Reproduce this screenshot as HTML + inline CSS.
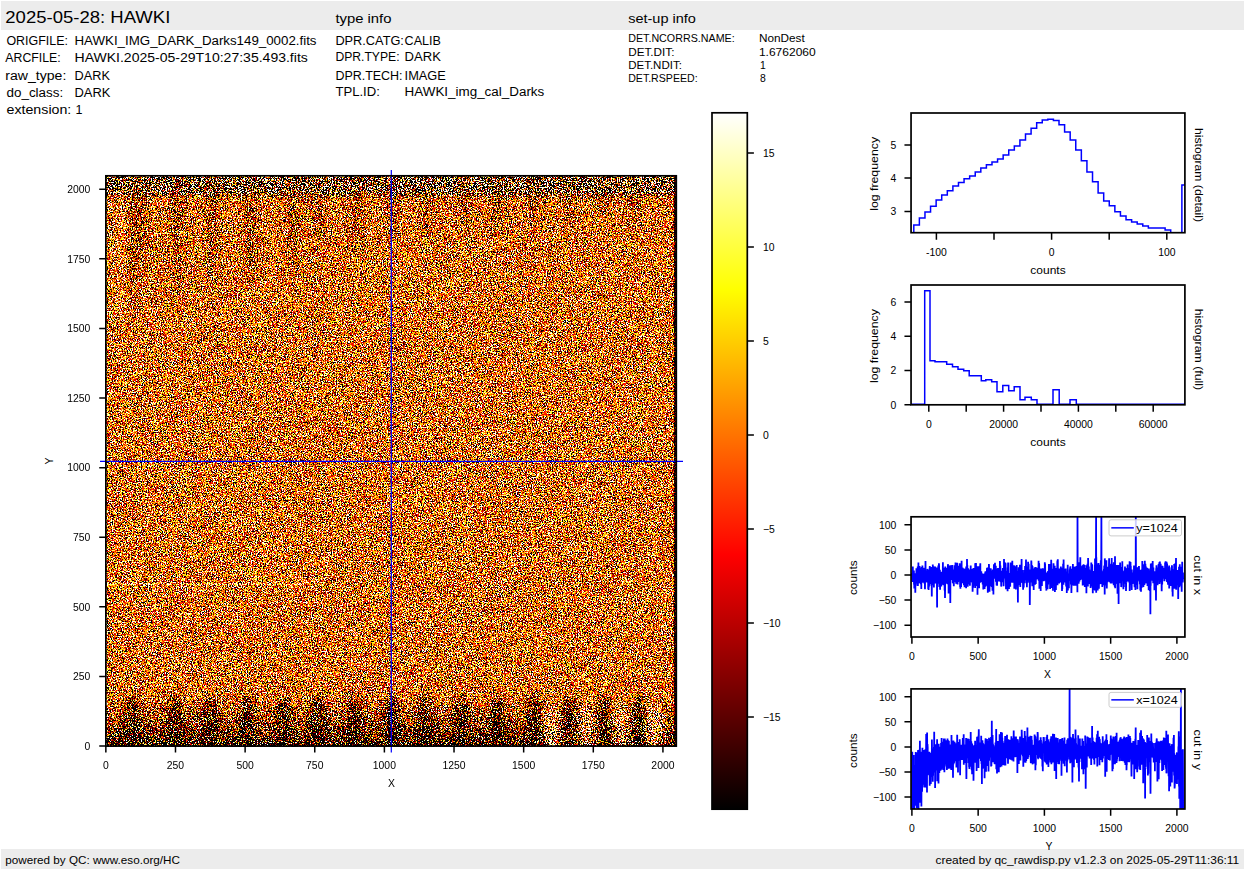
<!DOCTYPE html><html><head><meta charset="utf-8"><style>html,body{margin:0;padding:0;background:#fff;}svg{display:block}text{font-family:"Liberation Sans",sans-serif;fill:#000}</style></head><body>
<svg width="1245" height="870" viewBox="0 0 1245 870">
<defs>
<filter id="nz" x="0" y="0" width="100%" height="100%" color-interpolation-filters="sRGB" filterUnits="objectBoundingBox"><feTurbulence type="fractalNoise" baseFrequency="0.8" numOctaves="1" seed="3"/><feColorMatrix type="matrix" values="1 0 0 0 0 1 0 0 0 0 1 0 0 0 0 0 0 0 0 1"/><feComponentTransfer><feFuncR type="linear" slope="10.4763" intercept="-3.9884"/><feFuncG type="linear" slope="10.0398" intercept="-4.7805"/><feFuncB type="linear" slope="15.0597" intercept="-8.6708"/></feComponentTransfer></filter>
<linearGradient id="hot" x1="0" y1="1" x2="0" y2="0"><stop offset="0" stop-color="#000"/><stop offset="0.365079" stop-color="#f00"/><stop offset="0.746032" stop-color="#ff0"/><stop offset="1" stop-color="#fff"/></linearGradient>
</defs>
<rect x="1" y="1" width="1243" height="29" fill="#ececec"/>
<rect x="1" y="849" width="1243" height="20" fill="#ececec"/>
<text x="5.3" y="22.5" font-size="16" text-anchor="start" textLength="165.0" lengthAdjust="spacingAndGlyphs">2025-05-28: HAWKI</text>
<text x="335.4" y="22.5" font-size="12.5" text-anchor="start" textLength="56.1" lengthAdjust="spacingAndGlyphs">type info</text>
<text x="628.2" y="22.7" font-size="12.5" text-anchor="start" textLength="67.7" lengthAdjust="spacingAndGlyphs">set-up info</text>
<text x="6.4" y="45.2" font-size="12.5" text-anchor="start" textLength="61.6" lengthAdjust="spacingAndGlyphs">ORIGFILE:</text>
<text x="74.5" y="45.2" font-size="12.5" text-anchor="start" textLength="242.0" lengthAdjust="spacingAndGlyphs">HAWKI_IMG_DARK_Darks149_0002.fits</text>
<text x="5.3" y="61.5" font-size="12.5" text-anchor="start" textLength="55.4" lengthAdjust="spacingAndGlyphs">ARCFILE:</text>
<text x="74.5" y="61.5" font-size="12.5" text-anchor="start" textLength="233.3" lengthAdjust="spacingAndGlyphs">HAWKI.2025-05-29T10:27:35.493.fits</text>
<text x="5.3" y="79.5" font-size="12.5" text-anchor="start" textLength="61.0" lengthAdjust="spacingAndGlyphs">raw_type:</text>
<text x="74.5" y="79.5" font-size="12.5" text-anchor="start" textLength="35.4" lengthAdjust="spacingAndGlyphs">DARK</text>
<text x="6.5" y="96.8" font-size="12.5" text-anchor="start" textLength="56.7" lengthAdjust="spacingAndGlyphs">do_class:</text>
<text x="74.5" y="96.8" font-size="12.5" text-anchor="start" textLength="36.0" lengthAdjust="spacingAndGlyphs">DARK</text>
<text x="6.5" y="113.5" font-size="12.5" text-anchor="start" textLength="64.8" lengthAdjust="spacingAndGlyphs">extension:</text>
<text x="75.6" y="113.5" font-size="12.5" text-anchor="start">1</text>
<text x="335.4" y="44.7" font-size="12.5" text-anchor="start" textLength="68.5" lengthAdjust="spacingAndGlyphs">DPR.CATG:</text>
<text x="404.6" y="44.7" font-size="12.5" text-anchor="start" textLength="36.3" lengthAdjust="spacingAndGlyphs">CALIB</text>
<text x="335.4" y="61.3" font-size="12.5" text-anchor="start" textLength="64.2" lengthAdjust="spacingAndGlyphs">DPR.TYPE:</text>
<text x="404.6" y="61.3" font-size="12.5" text-anchor="start" textLength="36.3" lengthAdjust="spacingAndGlyphs">DARK</text>
<text x="335.4" y="79.8" font-size="12.5" text-anchor="start" textLength="67.2" lengthAdjust="spacingAndGlyphs">DPR.TECH:</text>
<text x="404.6" y="79.8" font-size="12.5" text-anchor="start" textLength="41.3" lengthAdjust="spacingAndGlyphs">IMAGE</text>
<text x="335.4" y="96.4" font-size="12.5" text-anchor="start" textLength="44.5" lengthAdjust="spacingAndGlyphs">TPL.ID:</text>
<text x="404.6" y="96.4" font-size="12.5" text-anchor="start" textLength="139.7" lengthAdjust="spacingAndGlyphs">HAWKI_img_cal_Darks</text>
<text x="628.2" y="42.4" font-size="10.4" text-anchor="start" textLength="106.5" lengthAdjust="spacingAndGlyphs">DET.NCORRS.NAME:</text>
<text x="758.9" y="42.4" font-size="10.4" text-anchor="start" textLength="45.8" lengthAdjust="spacingAndGlyphs">NonDest</text>
<text x="628.2" y="55.6" font-size="10.4" text-anchor="start" textLength="46.3" lengthAdjust="spacingAndGlyphs">DET.DIT:</text>
<text x="758.9" y="55.6" font-size="10.4" text-anchor="start" textLength="56.8" lengthAdjust="spacingAndGlyphs">1.6762060</text>
<text x="628.2" y="68.8" font-size="10.4" text-anchor="start" textLength="53.7" lengthAdjust="spacingAndGlyphs">DET.NDIT:</text>
<text x="760" y="68.8" font-size="10.4" text-anchor="start">1</text>
<text x="628.2" y="81.7" font-size="10.4" text-anchor="start" textLength="69.4" lengthAdjust="spacingAndGlyphs">DET.RSPEED:</text>
<text x="760" y="81.7" font-size="10.4" text-anchor="start">8</text>
<text x="5.3" y="863.7" font-size="10.4" text-anchor="start" textLength="174.6" lengthAdjust="spacingAndGlyphs">powered by QC: www.eso.org/HC</text>
<text x="1239.2" y="863.7" font-size="10.4" text-anchor="end" textLength="303.7" lengthAdjust="spacingAndGlyphs">created by qc_rawdisp.py v1.2.3 on 2025-05-29T11:36:11</text>
<defs><filter id="mz" x="105.85" y="175.8" width="570.4499999999999" height="570.3" filterUnits="userSpaceOnUse" color-interpolation-filters="sRGB"><feTurbulence type="fractalNoise" baseFrequency="0.8" numOctaves="1" seed="3" result="t1"/><feColorMatrix in="t1" type="matrix" values="1 0 0 0 0 1 0 0 0 0 1 0 0 0 0 0 0 0 0 1" result="a1"/><feTurbulence type="fractalNoise" baseFrequency="1.37" numOctaves="1" seed="9" result="t2"/><feColorMatrix in="t2" type="matrix" values="1 0 0 0 0 1 0 0 0 0 1 0 0 0 0 0 0 0 0 1" result="a2"/><feComposite in="a1" in2="a2" operator="arithmetic" k2="1" k3="1" k4="-0.5" result="t12"/><feColorMatrix in="t12" type="matrix" values="1 0 0 0 0 1 0 0 0 0 1 0 0 0 0 0 0 0 0 1" result="s"/><feColorMatrix in="SourceGraphic" type="matrix" values="0 1 0 0 0 0 1 0 0 0 0 1 0 0 0 0 0 0 0 1" result="g"/><feColorMatrix in="SourceGraphic" type="matrix" values="1 0 0 0 0 1 0 0 0 0 1 0 0 0 0 0 0 0 0 1" result="o"/><feComposite in="s" in2="g" operator="arithmetic" k1="1" k2="0" k3="0" k4="0" result="p"/><feComposite in="p" in2="g" operator="arithmetic" k1="0" k2="2.5" k3="-1.25" k4="0.5" result="v"/><feComposite in="v" in2="o" operator="arithmetic" k1="0" k2="1" k3="1" k4="-0.5" result="u"/><feComponentTransfer in="u"><feFuncR type="table" tableValues="0 0 0 0 0 0 0 0 0 0 0 0 0 0 0 0 0 0 0 0 0 0.0811 0.1975 0.3138 0.4301 0.5464 0.6628 0.7791 0.8954 1 1 1 1 1 1 1 1 1 1 1 1 1 1 1 1 1 1 1 1 1 1 1 1 1 1 1 1 1 1 1 1 1 1 1 1"/><feFuncG type="table" tableValues="0 0 0 0 0 0 0 0 0 0 0 0 0 0 0 0 0 0 0 0 0 0 0 0 0 0 0 0 0 0.0112 0.1227 0.2342 0.3457 0.4497 0.5538 0.6578 0.7618 0.8659 0.9699 1 1 1 1 1 1 1 1 1 1 1 1 1 1 1 1 1 1 1 1 1 1 1 1 1 1"/><feFuncB type="table" tableValues="0 0 0 0 0 0 0 0 0 0 0 0 0 0 0 0 0 0 0 0 0 0 0 0 0 0 0 0 0 0 0 0 0 0 0 0 0 0 0 0.111 0.267 0.4231 0.5792 0.7352 0.8913 1 1 1 1 1 1 1 1 1 1 1 1 1 1 1 1 1 1 1 1"/><feFuncA type="linear" slope="0" intercept="1"/></feComponentTransfer></filter><filter id="bl4" x="-50%" y="-50%" width="200%" height="200%"><feGaussianBlur stdDeviation="4"/></filter><filter id="bl2" x="-50%" y="-50%" width="200%" height="200%"><feGaussianBlur stdDeviation="2"/></filter><linearGradient id="gTop" x1="0" y1="0" x2="0" y2="1"><stop offset="0" stop-color="rgb(102,255,0)"/><stop offset="0.65" stop-color="rgb(105,255,0)"/><stop offset="1" stop-color="rgb(120,102,0)"/></linearGradient><linearGradient id="gBot" x1="0" y1="0" x2="0" y2="1"><stop offset="0" stop-color="rgb(128,102,0)"/><stop offset="0.5" stop-color="rgb(110,129,0)"/><stop offset="1" stop-color="rgb(67,190,0)"/></linearGradient></defs>
<g filter="url(#mz)"><rect x="105.85" y="175.8" width="570.4499999999999" height="570.3" fill="rgb(128,102,0)"/><rect x="118" y="200" width="9" height="125" fill="rgb(143,102,0)" opacity="0.7" filter="url(#bl2)"/><rect x="105.85" y="175.8" width="570.4499999999999" height="22" fill="url(#gTop)"/><ellipse cx="133" cy="175.8" rx="5" ry="130" fill="rgb(100,136,0)" opacity="0.65" filter="url(#bl4)"/><ellipse cx="142.7" cy="175.8" rx="5" ry="90" fill="rgb(100,136,0)" opacity="0.65" filter="url(#bl4)"/><ellipse cx="177" cy="175.8" rx="5" ry="125" fill="rgb(100,136,0)" opacity="0.65" filter="url(#bl4)"/><ellipse cx="213" cy="175.8" rx="5" ry="120" fill="rgb(100,136,0)" opacity="0.65" filter="url(#bl4)"/><ellipse cx="250" cy="175.8" rx="5" ry="110" fill="rgb(100,136,0)" opacity="0.65" filter="url(#bl4)"/><ellipse cx="293" cy="175.8" rx="5" ry="105" fill="rgb(100,136,0)" opacity="0.65" filter="url(#bl4)"/><ellipse cx="318" cy="175.8" rx="5" ry="70" fill="rgb(100,136,0)" opacity="0.65" filter="url(#bl4)"/><ellipse cx="356" cy="175.8" rx="5" ry="80" fill="rgb(100,136,0)" opacity="0.65" filter="url(#bl4)"/><ellipse cx="392" cy="175.8" rx="5" ry="60" fill="rgb(100,136,0)" opacity="0.65" filter="url(#bl4)"/><ellipse cx="427" cy="175.8" rx="5" ry="65" fill="rgb(100,136,0)" opacity="0.65" filter="url(#bl4)"/><ellipse cx="465" cy="175.8" rx="5" ry="55" fill="rgb(100,136,0)" opacity="0.65" filter="url(#bl4)"/><ellipse cx="498" cy="175.8" rx="5" ry="60" fill="rgb(100,136,0)" opacity="0.65" filter="url(#bl4)"/><ellipse cx="536" cy="175.8" rx="5" ry="50" fill="rgb(100,136,0)" opacity="0.65" filter="url(#bl4)"/><ellipse cx="569" cy="175.8" rx="5" ry="55" fill="rgb(100,136,0)" opacity="0.65" filter="url(#bl4)"/><ellipse cx="605" cy="175.8" rx="5" ry="45" fill="rgb(100,136,0)" opacity="0.65" filter="url(#bl4)"/><ellipse cx="635" cy="175.8" rx="5" ry="50" fill="rgb(100,136,0)" opacity="0.65" filter="url(#bl4)"/><rect x="105.85" y="700.1" width="570.4499999999999" height="46" fill="url(#gBot)"/><ellipse cx="133.7" cy="746.1" rx="7" ry="50" fill="rgb(52,204,0)" opacity="0.8" filter="url(#bl4)"/><ellipse cx="174.7" cy="746.1" rx="7" ry="50" fill="rgb(52,204,0)" opacity="0.8" filter="url(#bl4)"/><ellipse cx="210.8" cy="746.1" rx="7" ry="50" fill="rgb(52,204,0)" opacity="0.8" filter="url(#bl4)"/><ellipse cx="247" cy="746.1" rx="7" ry="50" fill="rgb(52,204,0)" opacity="0.8" filter="url(#bl4)"/><ellipse cx="283" cy="746.1" rx="7" ry="50" fill="rgb(52,204,0)" opacity="0.8" filter="url(#bl4)"/><ellipse cx="319" cy="746.1" rx="7" ry="50" fill="rgb(52,204,0)" opacity="0.8" filter="url(#bl4)"/><ellipse cx="355" cy="746.1" rx="7" ry="50" fill="rgb(52,204,0)" opacity="0.8" filter="url(#bl4)"/><ellipse cx="392" cy="746.1" rx="7" ry="50" fill="rgb(52,204,0)" opacity="0.8" filter="url(#bl4)"/><ellipse cx="424.8" cy="746.1" rx="7" ry="50" fill="rgb(52,204,0)" opacity="0.8" filter="url(#bl4)"/><ellipse cx="462" cy="746.1" rx="7" ry="50" fill="rgb(52,204,0)" opacity="0.8" filter="url(#bl4)"/><ellipse cx="497" cy="746.1" rx="7" ry="50" fill="rgb(52,204,0)" opacity="0.8" filter="url(#bl4)"/><ellipse cx="534" cy="746.1" rx="7" ry="50" fill="rgb(52,204,0)" opacity="0.8" filter="url(#bl4)"/><ellipse cx="569" cy="746.1" rx="7" ry="50" fill="rgb(52,204,0)" opacity="0.8" filter="url(#bl4)"/><ellipse cx="604" cy="746.1" rx="7" ry="50" fill="rgb(52,204,0)" opacity="0.8" filter="url(#bl4)"/><ellipse cx="639" cy="746.1" rx="7" ry="50" fill="rgb(52,204,0)" opacity="0.8" filter="url(#bl4)"/><ellipse cx="552" cy="730" rx="9" ry="26" fill="rgb(155,170,0)" opacity="0.75" filter="url(#bl4)"/><ellipse cx="587" cy="730" rx="9" ry="26" fill="rgb(155,170,0)" opacity="0.75" filter="url(#bl4)"/><ellipse cx="621" cy="730" rx="9" ry="26" fill="rgb(155,170,0)" opacity="0.75" filter="url(#bl4)"/><ellipse cx="655" cy="730" rx="9" ry="26" fill="rgb(155,170,0)" opacity="0.75" filter="url(#bl4)"/><rect x="107" y="583.5" width="200" height="1.2" fill="rgb(163,102,0)"/><rect x="673.8" y="175.8" width="2.5" height="570.3" fill="rgb(77,68,0)"/></g>
<line x1="391.30" y1="170" x2="391.30" y2="752.5" stroke="#00f" stroke-width="1.2"/>
<line x1="100" y1="461.30" x2="683" y2="461.30" stroke="#00f" stroke-width="1.2"/>
<rect x="105.85" y="175.8" width="570.4499999999999" height="570.3" fill="none" stroke="#000" stroke-width="1.7"/>
<text x="90.4" y="749.9" font-size="10.4" text-anchor="end">0</text>
<text x="105.85" y="768.8" font-size="10.4" text-anchor="middle">0</text>
<text x="90.4" y="680.28" font-size="10.4" text-anchor="end">250</text>
<text x="175.49" y="768.8" font-size="10.4" text-anchor="middle">250</text>
<text x="90.4" y="610.67" font-size="10.4" text-anchor="end">500</text>
<text x="245.12" y="768.8" font-size="10.4" text-anchor="middle">500</text>
<text x="90.4" y="541.05" font-size="10.4" text-anchor="end">750</text>
<text x="314.76" y="768.8" font-size="10.4" text-anchor="middle">750</text>
<text x="90.4" y="471.43" font-size="10.4" text-anchor="end">1000</text>
<text x="384.39" y="768.8" font-size="10.4" text-anchor="middle">1000</text>
<text x="90.4" y="401.82" font-size="10.4" text-anchor="end">1250</text>
<text x="454.03" y="768.8" font-size="10.4" text-anchor="middle">1250</text>
<text x="90.4" y="332.2" font-size="10.4" text-anchor="end">1500</text>
<text x="523.66" y="768.8" font-size="10.4" text-anchor="middle">1500</text>
<text x="90.4" y="262.58" font-size="10.4" text-anchor="end">1750</text>
<text x="593.3" y="768.8" font-size="10.4" text-anchor="middle">1750</text>
<text x="90.4" y="192.97" font-size="10.4" text-anchor="end">2000</text>
<text x="662.93" y="768.8" font-size="10.4" text-anchor="middle">2000</text>
<path d="M99.25,746.10H105.85M105.85,746.1V752.6M99.25,676.48H105.85M175.49,746.1V752.6M99.25,606.87H105.85M245.12,746.1V752.6M99.25,537.25H105.85M314.76,746.1V752.6M99.25,467.63H105.85M384.39,746.1V752.6M99.25,398.02H105.85M454.03,746.1V752.6M99.25,328.40H105.85M523.66,746.1V752.6M99.25,258.78H105.85M593.30,746.1V752.6M99.25,189.17H105.85M662.93,746.1V752.6" stroke="#000" stroke-width="1.5" fill="none"/>
<text x="391.5" y="786.8" font-size="10.4" text-anchor="middle">X</text>
<text x="0" y="0" font-size="10.4" text-anchor="middle" transform="translate(52.8,461) rotate(-90)">Y</text>
<rect x="712" y="112.8" width="35.299999999999955" height="696.4000000000001" fill="url(#hot)" stroke="#000" stroke-width="1.7"/>
<text x="763" y="156.83477321814252" font-size="10.4" text-anchor="start">15</text>
<text x="763" y="250.8412526997841" font-size="10.4" text-anchor="start">10</text>
<text x="763" y="344.8477321814255" font-size="10.4" text-anchor="start">5</text>
<text x="763" y="438.85421166306696" font-size="10.4" text-anchor="start">0</text>
<text x="763" y="532.8606911447084" font-size="10.4" text-anchor="start">−5</text>
<text x="763" y="626.8671706263499" font-size="10.4" text-anchor="start">−10</text>
<text x="763" y="720.8736501079914" font-size="10.4" text-anchor="start">−15</text>
<path d="M747.3,153.03H753.9M747.3,247.04H753.9M747.3,341.05H753.9M747.3,435.05H753.9M747.3,529.06H753.9M747.3,623.07H753.9M747.3,717.07H753.9" stroke="#000" stroke-width="1.5" fill="none"/>
<clipPath id="c1"><rect x="911.05" y="113.0" width="273.85000000000014" height="119.69999999999999"/></clipPath>
<path d="M913.8,232.7V224.9V224.9H919.38V217.9H924.97V212H930.55V206.3H936.14V200.1H941.72V195H947.31V190.8H952.89V186H958.48V182.6H964.06V178.7H969.65V176H975.23V172H980.82V168.1H986.40V164.7H991.99V161.9H997.57V159H1003.16V155.1H1008.74V150H1014.33V146.1H1019.91V139.9H1025.50V134H1031.09V128.3H1036.67V122.8H1042.25V120H1047.84V119.3H1053.42V120.5H1059.01V124.7H1064.60V132.1H1070.18V139.9H1075.76V150H1081.35V160.8H1086.93V172H1092.52V181.8H1098.11V192.9H1103.69V200.9H1109.27V205.8H1114.86V211.7H1120.44V215.9H1126.03V219.8H1131.62V222.1H1137.20V224.1H1142.78V226H1148.37V228H1153.95V228H1159.54V228H1165.12V229.9H1170.71V232.7H1181.88V184.9H1184.9" fill="none" stroke="#00f" stroke-width="1.5" clip-path="url(#c1)"/>
<rect x="911.05" y="113.0" width="273.85000000000014" height="119.69999999999999" fill="none" stroke="#000" stroke-width="1.7"/>
<text x="896.4" y="148.8" font-size="10.4" text-anchor="end">5</text>
<text x="896.4" y="181.70000000000002" font-size="10.4" text-anchor="end">4</text>
<text x="896.4" y="215.3" font-size="10.4" text-anchor="end">3</text>
<text x="936.4" y="255.9" font-size="10.4" text-anchor="middle">-100</text>
<text x="1051.6" y="255.9" font-size="10.4" text-anchor="middle">0</text>
<text x="1166.8" y="255.9" font-size="10.4" text-anchor="middle">100</text>
<path d="M904.4499999999999,145H911.05M904.4499999999999,177.9H911.05M904.4499999999999,211.5H911.05M936.40,232.7V239.7M994.00,232.7V239.7M1051.60,232.7V239.7M1109.20,232.7V239.7M1166.80,232.7V239.7" stroke="#000" stroke-width="1.5" fill="none"/>
<text x="1048" y="274.3" font-size="10.4" text-anchor="middle" textLength="35.3" lengthAdjust="spacingAndGlyphs">counts</text>
<text x="0" y="0" font-size="10.4" text-anchor="middle" transform="translate(878.3,173.9) rotate(-90)" textLength="73.9" lengthAdjust="spacingAndGlyphs">log frequency</text>
<text x="0" y="0" font-size="10.4" text-anchor="middle" transform="translate(1194.5,175) rotate(90)" textLength="94.2" lengthAdjust="spacingAndGlyphs">histogram (detail)</text>
<path d="M911.2,404.2H924.7V290.8H930V360.8H935V361.7H946.7V364.2H952.5V366.7H958V369.2H963.7V370.8H969.2V375.8H981.3V380.8H985.8V379.7H991.7V381.7H997V391.7H1002.8V385.5H1008.7V390.8H1014.2V386.7H1020V399.7H1025V397.2H1031.3V399.7H1037V404.2H1053V389.7H1059.2V404.2H1070V399.7H1076.3V404.2H1184.9" fill="none" stroke="#00f" stroke-width="1.5"/>
<rect x="911.05" y="285.0" width="273.85000000000014" height="119.80000000000001" fill="none" stroke="#000" stroke-width="1.7"/>
<text x="896.4" y="408.6" font-size="10.4" text-anchor="end">0</text>
<text x="896.4" y="374.3" font-size="10.4" text-anchor="end">2</text>
<text x="896.4" y="340.0" font-size="10.4" text-anchor="end">4</text>
<text x="896.4" y="305.7" font-size="10.4" text-anchor="end">6</text>
<text x="928.8" y="427.5" font-size="10.4" text-anchor="middle">0</text>
<text x="1003.6" y="427.5" font-size="10.4" text-anchor="middle">20000</text>
<text x="1078.4" y="427.5" font-size="10.4" text-anchor="middle">40000</text>
<text x="1153.2" y="427.5" font-size="10.4" text-anchor="middle">60000</text>
<path d="M904.4499999999999,404.8H911.05M904.4499999999999,370.5H911.05M904.4499999999999,336.2H911.05M904.4499999999999,301.9H911.05M928.80,404.8V411.8M966.20,404.8V411.8M1003.60,404.8V411.8M1041.00,404.8V411.8M1078.40,404.8V411.8M1115.80,404.8V411.8M1153.20,404.8V411.8" stroke="#000" stroke-width="1.5" fill="none"/>
<text x="1048" y="446.3" font-size="10.4" text-anchor="middle" textLength="35.3" lengthAdjust="spacingAndGlyphs">counts</text>
<text x="0" y="0" font-size="10.4" text-anchor="middle" transform="translate(878.3,346.1) rotate(-90)" textLength="73.9" lengthAdjust="spacingAndGlyphs">log frequency</text>
<text x="0" y="0" font-size="10.4" text-anchor="middle" transform="translate(1194.5,349.4) rotate(90)" textLength="81.5" lengthAdjust="spacingAndGlyphs">histogram (full)</text>
<clipPath id="c3"><rect x="911.05" y="516.8" width="273.85000000000014" height="120.20000000000005"/></clipPath>
<path d="M911.9 575.0L912.0 573.1L912.2 576.9L912.3 581.3L912.4 578.2L912.6 582.0L912.7 574.6L912.8 566.6L913.0 578.5L913.1 579.4L913.2 571.9L913.4 572.8L913.5 574.3L913.6 581.5L913.8 575.2L913.9 570.6L914.0 584.4L914.2 578.2L914.3 588.4L914.4 584.1L914.5 587.9L914.7 576.7L914.8 583.9L914.9 573.3L915.1 574.0L915.2 576.3L915.3 592.7L915.5 578.8L915.6 575.3L915.7 574.3L915.9 585.8L916.0 578.4L916.1 581.9L916.3 580.7L916.4 568.3L916.5 580.7L916.7 575.2L916.8 569.5L916.9 579.1L917.1 575.8L917.2 574.3L917.3 574.6L917.5 583.6L917.6 574.5L917.7 566.5L917.9 585.9L918.0 569.6L918.1 574.3L918.3 579.5L918.4 562.4L918.5 570.2L918.7 583.4L918.8 574.5L918.9 571.4L919.1 576.3L919.2 570.7L919.3 575.5L919.5 570.8L919.6 566.0L919.7 579.7L919.9 573.7L920.0 578.3L920.1 574.2L920.2 583.3L920.4 579.1L920.5 576.4L920.6 569.4L920.8 567.8L920.9 584.3L921.0 580.6L921.2 570.9L921.3 589.0L921.4 578.3L921.6 575.7L921.7 567.1L921.8 570.7L922.0 577.3L922.1 577.6L922.2 576.8L922.4 565.4L922.5 578.0L922.6 577.1L922.8 572.8L922.9 575.8L923.0 576.4L923.2 582.8L923.3 575.1L923.4 578.1L923.6 567.7L923.7 570.9L923.8 575.2L924.0 570.8L924.1 577.4L924.2 568.4L924.4 575.0L924.5 571.3L924.6 584.1L924.8 572.8L924.9 586.9L925.0 589.3L925.1 577.1L925.3 581.3L925.4 574.0L925.5 560.9L925.7 580.8L925.8 579.4L925.9 573.7L926.1 571.9L926.2 576.2L926.3 576.4L926.5 570.6L926.6 571.7L926.7 582.3L926.9 575.6L927.0 574.8L927.1 582.4L927.3 573.4L927.4 581.0L927.5 568.9L927.7 573.8L927.8 574.4L927.9 579.2L928.1 575.8L928.2 589.0L928.3 583.0L928.5 572.7L928.6 590.0L928.7 569.7L928.9 587.3L929.0 570.3L929.1 580.9L929.3 570.1L929.4 574.2L929.5 585.8L929.7 567.2L929.8 566.0L929.9 575.5L930.1 576.9L930.2 576.1L930.3 581.9L930.4 568.1L930.6 578.8L930.7 575.4L930.8 580.6L931.0 579.4L931.1 584.0L931.2 567.1L931.4 576.1L931.5 568.9L931.6 574.9L931.8 596.6L931.9 577.3L932.0 578.9L932.2 575.0L932.3 577.6L932.4 577.1L932.6 584.7L932.7 580.7L932.8 564.6L933.0 579.7L933.1 582.4L933.2 572.9L933.4 566.2L933.5 585.2L933.6 576.5L933.8 579.4L933.9 587.4L934.0 570.4L934.2 575.2L934.3 574.6L934.4 580.3L934.6 572.1L934.7 578.8L934.8 576.0L935.0 582.8L935.1 583.5L935.2 566.6L935.4 578.6L935.5 573.2L935.6 575.2L935.8 578.1L935.9 578.6L936.0 571.0L936.1 577.1L936.3 576.1L936.4 574.9L936.5 567.6L936.7 570.7L936.8 572.6L936.9 579.0L937.1 607.6L937.2 569.0L937.3 568.9L937.5 576.0L937.6 571.6L937.7 577.9L937.9 569.8L938.0 569.2L938.1 578.2L938.3 565.5L938.4 583.8L938.5 569.6L938.7 571.9L938.8 569.5L938.9 563.2L939.1 565.7L939.2 583.0L939.3 586.9L939.5 569.9L939.6 582.1L939.7 575.1L939.9 569.7L940.0 586.6L940.1 589.8L940.3 573.4L940.4 574.7L940.5 576.7L940.7 574.8L940.8 581.0L940.9 585.6L941.0 576.2L941.2 581.8L941.3 586.6L941.4 571.8L941.6 575.4L941.7 572.4L941.8 582.0L942.0 579.6L942.1 582.0L942.2 581.2L942.4 573.8L942.5 580.5L942.6 572.8L942.8 572.9L942.9 562.3L943.0 584.8L943.2 569.4L943.3 575.6L943.4 575.1L943.6 585.2L943.7 578.2L943.8 570.3L944.0 575.6L944.1 574.5L944.2 577.0L944.4 567.8L944.5 575.2L944.6 590.5L944.8 579.9L944.9 588.8L945.0 597.9L945.2 578.7L945.3 566.6L945.4 574.7L945.6 583.2L945.7 583.2L945.8 567.9L946.0 574.0L946.1 574.7L946.2 575.4L946.4 574.8L946.5 569.9L946.6 571.5L946.7 573.6L946.9 582.3L947.0 571.8L947.1 579.8L947.3 568.1L947.4 583.9L947.5 576.0L947.7 575.1L947.8 584.3L947.9 564.2L948.1 565.8L948.2 578.3L948.3 570.2L948.5 572.6L948.6 593.4L948.7 573.4L948.9 575.4L949.0 574.5L949.1 582.6L949.3 576.9L949.4 576.3L949.5 567.5L949.7 572.9L949.8 575.0L949.9 565.4L950.1 578.9L950.2 577.7L950.3 603.0L950.5 565.2L950.6 568.9L950.7 569.2L950.9 570.8L951.0 574.3L951.1 573.6L951.3 576.8L951.4 576.4L951.5 574.7L951.6 565.5L951.8 571.5L951.9 575.4L952.0 579.1L952.2 579.5L952.3 564.9L952.4 571.8L952.6 574.6L952.7 577.4L952.8 582.8L953.0 582.8L953.1 569.5L953.2 577.8L953.4 576.6L953.5 576.6L953.6 574.3L953.8 586.2L953.9 576.7L954.0 581.0L954.2 569.4L954.3 580.4L954.4 571.4L954.6 565.4L954.7 577.2L954.8 579.2L955.0 573.8L955.1 575.0L955.2 582.0L955.4 572.1L955.5 562.4L955.6 576.8L955.8 576.4L955.9 582.3L956.0 573.0L956.2 583.8L956.3 582.8L956.4 567.0L956.6 581.4L956.7 568.2L956.8 565.4L956.9 573.4L957.1 571.5L957.2 562.7L957.3 576.4L957.5 579.2L957.6 584.5L957.7 574.7L957.9 565.7L958.0 569.0L958.1 581.6L958.3 581.0L958.4 578.5L958.5 573.2L958.7 576.4L958.8 573.7L958.9 573.1L959.1 577.1L959.2 575.3L959.3 573.7L959.5 575.6L959.6 571.8L959.7 563.3L959.9 571.3L960.0 574.6L960.1 586.9L960.3 572.6L960.4 588.7L960.5 584.9L960.7 569.6L960.8 570.6L960.9 576.1L961.1 587.0L961.2 577.6L961.3 579.8L961.5 571.0L961.6 560.8L961.7 573.6L961.9 580.5L962.0 583.2L962.1 575.4L962.2 576.2L962.4 583.1L962.5 574.3L962.6 583.1L962.8 568.0L962.9 568.3L963.0 568.2L963.2 578.3L963.3 571.8L963.4 575.9L963.6 577.7L963.7 577.4L963.8 584.1L964.0 585.1L964.1 570.0L964.2 576.3L964.4 573.6L964.5 568.7L964.6 587.2L964.8 580.5L964.9 573.9L965.0 572.5L965.2 577.7L965.3 568.5L965.4 573.7L965.6 583.5L965.7 581.5L965.8 569.9L966.0 572.1L966.1 588.3L966.2 566.5L966.4 571.2L966.5 566.6L966.6 577.7L966.8 577.1L966.9 582.9L967.0 559.1L967.2 576.2L967.3 565.0L967.4 579.5L967.5 574.0L967.7 586.7L967.8 585.2L967.9 568.8L968.1 583.8L968.2 568.3L968.3 572.9L968.5 582.3L968.6 578.5L968.7 578.2L968.9 575.3L969.0 578.8L969.1 580.8L969.3 577.1L969.4 582.2L969.5 584.1L969.7 575.3L969.8 569.5L969.9 585.7L970.1 575.0L970.2 579.6L970.3 581.9L970.5 569.6L970.6 578.6L970.7 565.6L970.9 580.5L971.0 572.6L971.1 576.6L971.3 580.3L971.4 571.3L971.5 576.1L971.7 571.2L971.8 575.3L971.9 582.6L972.1 575.7L972.2 574.7L972.3 569.0L972.5 581.4L972.6 591.8L972.7 587.1L972.9 570.9L973.0 582.6L973.1 587.7L973.2 575.4L973.4 568.1L973.5 585.7L973.6 582.6L973.8 580.2L973.9 582.9L974.0 572.6L974.2 580.7L974.3 580.1L974.4 571.3L974.6 580.3L974.7 572.3L974.8 581.8L975.0 583.5L975.1 587.9L975.2 563.3L975.4 577.3L975.5 573.5L975.6 575.2L975.8 574.0L975.9 574.7L976.0 563.0L976.2 582.3L976.3 585.9L976.4 582.1L976.6 584.4L976.7 570.3L976.8 569.9L977.0 581.8L977.1 584.8L977.2 577.5L977.4 566.3L977.5 594.8L977.6 571.7L977.8 582.6L977.9 568.5L978.0 582.6L978.1 577.0L978.3 585.6L978.4 581.9L978.5 566.3L978.7 569.9L978.8 577.8L978.9 581.1L979.1 588.3L979.2 577.8L979.3 575.2L979.5 575.6L979.6 575.7L979.7 582.9L979.9 575.5L980.0 575.3L980.1 566.9L980.3 563.3L980.4 576.0L980.5 580.4L980.7 575.5L980.8 579.3L980.9 580.2L981.1 575.4L981.2 582.3L981.3 571.2L981.5 575.7L981.6 573.4L981.7 576.3L981.9 580.1L982.0 581.7L982.1 576.7L982.3 578.9L982.4 573.5L982.5 575.0L982.7 584.6L982.8 574.6L982.9 584.4L983.1 579.3L983.2 577.1L983.3 589.6L983.4 574.4L983.6 574.1L983.7 576.1L983.8 578.0L984.0 577.6L984.1 581.9L984.2 576.9L984.4 578.9L984.5 574.4L984.6 589.1L984.8 573.5L984.9 574.1L985.0 576.0L985.2 578.1L985.3 571.5L985.4 586.7L985.6 578.4L985.7 573.5L985.8 573.2L986.0 572.6L986.1 579.6L986.2 576.8L986.4 571.0L986.5 572.3L986.6 573.7L986.8 585.6L986.9 571.6L987.0 567.7L987.2 568.7L987.3 573.5L987.4 585.9L987.6 569.1L987.7 576.0L987.8 592.8L988.0 572.6L988.1 585.5L988.2 584.1L988.4 579.5L988.5 567.0L988.6 577.6L988.8 573.3L988.9 564.0L989.0 565.0L989.1 575.7L989.3 576.7L989.4 583.9L989.5 591.7L989.7 572.3L989.8 572.5L989.9 574.3L990.1 568.8L990.2 580.4L990.3 575.4L990.5 570.4L990.6 571.3L990.7 568.3L990.9 572.5L991.0 577.2L991.1 572.7L991.3 582.0L991.4 586.5L991.5 571.4L991.7 575.4L991.8 573.1L991.9 586.9L992.1 577.6L992.2 579.2L992.3 581.1L992.5 590.8L992.6 577.4L992.7 569.4L992.9 572.6L993.0 579.2L993.1 575.1L993.3 570.3L993.4 594.4L993.5 575.9L993.7 571.6L993.8 570.7L993.9 564.3L994.0 567.9L994.2 573.0L994.3 573.1L994.4 570.1L994.6 578.8L994.7 575.3L994.8 569.3L995.0 562.7L995.1 576.1L995.2 575.3L995.4 573.8L995.5 566.6L995.6 575.2L995.8 565.8L995.9 581.8L996.0 576.3L996.2 576.4L996.3 570.1L996.4 568.4L996.6 585.6L996.7 581.4L996.8 572.9L997.0 579.6L997.1 585.7L997.2 568.5L997.4 571.9L997.5 571.9L997.6 578.3L997.8 568.5L997.9 576.7L998.0 568.1L998.2 581.4L998.3 581.0L998.4 573.7L998.6 579.9L998.7 570.8L998.8 573.4L999.0 581.5L999.1 574.5L999.2 577.5L999.4 569.3L999.5 579.4L999.6 578.1L999.7 578.8L999.9 561.0L1000.0 562.5L1000.1 574.6L1000.3 573.6L1000.4 565.4L1000.5 575.9L1000.7 581.9L1000.8 581.8L1000.9 572.2L1001.1 580.8L1001.2 586.6L1001.3 585.1L1001.5 570.8L1001.6 580.3L1001.7 576.0L1001.9 573.7L1002.0 571.1L1002.1 577.4L1002.3 571.9L1002.4 581.3L1002.5 577.5L1002.7 582.2L1002.8 567.9L1002.9 575.2L1003.1 580.2L1003.2 577.5L1003.3 576.6L1003.5 570.6L1003.6 586.2L1003.7 582.3L1003.9 577.7L1004.0 559.1L1004.1 569.0L1004.3 575.8L1004.4 570.5L1004.5 562.1L1004.6 576.6L1004.8 577.6L1004.9 567.4L1005.0 571.9L1005.2 570.8L1005.3 578.6L1005.4 562.9L1005.6 564.3L1005.7 571.4L1005.8 570.7L1006.0 589.2L1006.1 571.0L1006.2 576.4L1006.4 572.3L1006.5 570.7L1006.6 577.4L1006.8 586.9L1006.9 575.7L1007.0 580.2L1007.2 577.3L1007.3 579.2L1007.4 577.4L1007.6 591.2L1007.7 567.4L1007.8 573.4L1008.0 568.0L1008.1 562.6L1008.2 574.9L1008.4 587.7L1008.5 581.3L1008.6 583.5L1008.8 578.5L1008.9 574.5L1009.0 589.1L1009.2 572.9L1009.3 585.6L1009.4 573.1L1009.6 575.8L1009.7 577.2L1009.8 575.5L1010.0 578.8L1010.1 579.3L1010.2 586.8L1010.3 575.2L1010.5 563.4L1010.6 562.6L1010.7 566.7L1010.9 570.6L1011.0 579.8L1011.1 565.9L1011.3 575.4L1011.4 575.5L1011.5 577.0L1011.7 574.4L1011.8 578.1L1011.9 575.6L1012.1 582.6L1012.2 577.6L1012.3 560.7L1012.5 575.5L1012.6 576.7L1012.7 571.7L1012.9 570.6L1013.0 582.8L1013.1 576.5L1013.3 569.2L1013.4 573.3L1013.5 574.2L1013.7 565.2L1013.8 579.8L1013.9 574.5L1014.1 578.7L1014.2 565.6L1014.3 588.7L1014.5 579.7L1014.6 578.7L1014.7 570.8L1014.9 571.2L1015.0 566.2L1015.1 586.1L1015.2 570.3L1015.4 577.1L1015.5 579.7L1015.6 571.6L1015.8 581.5L1015.9 589.6L1016.0 577.6L1016.2 585.5L1016.3 579.6L1016.4 572.7L1016.6 573.0L1016.7 565.0L1016.8 576.4L1017.0 585.8L1017.1 580.3L1017.2 581.5L1017.4 583.6L1017.5 572.3L1017.6 579.5L1017.8 588.9L1017.9 602.6L1018.0 575.8L1018.2 572.8L1018.3 574.3L1018.4 571.0L1018.6 574.8L1018.7 567.2L1018.8 572.3L1019.0 572.5L1019.1 572.4L1019.2 585.2L1019.4 576.2L1019.5 576.8L1019.6 573.7L1019.8 584.5L1019.9 564.7L1020.0 574.3L1020.2 583.5L1020.3 587.0L1020.4 577.0L1020.5 575.6L1020.7 580.0L1020.8 574.4L1020.9 579.5L1021.1 571.5L1021.2 580.1L1021.3 575.3L1021.5 568.9L1021.6 558.9L1021.7 582.1L1021.9 578.3L1022.0 580.9L1022.1 570.1L1022.3 583.1L1022.4 578.4L1022.5 575.2L1022.7 581.9L1022.8 581.7L1022.9 578.3L1023.1 589.8L1023.2 585.2L1023.3 577.9L1023.5 574.1L1023.6 576.3L1023.7 587.5L1023.9 578.3L1024.0 570.0L1024.1 571.5L1024.3 575.6L1024.4 581.2L1024.5 571.0L1024.7 579.1L1024.8 583.2L1024.9 580.6L1025.1 565.9L1025.2 573.6L1025.3 570.3L1025.5 580.3L1025.6 569.1L1025.7 579.2L1025.8 576.1L1026.0 559.4L1026.1 570.2L1026.2 578.5L1026.4 575.6L1026.5 573.0L1026.6 567.4L1026.8 578.4L1026.9 587.2L1027.0 577.0L1027.2 574.9L1027.3 574.3L1027.4 566.7L1027.6 573.0L1027.7 569.9L1027.8 582.7L1028.0 569.6L1028.1 561.8L1028.2 570.1L1028.4 573.4L1028.5 574.0L1028.6 563.8L1028.8 581.5L1028.9 575.8L1029.0 572.1L1029.2 570.3L1029.3 578.3L1029.4 573.1L1029.6 577.0L1029.7 574.2L1029.8 605.1L1030.0 583.0L1030.1 575.1L1030.2 569.5L1030.4 581.8L1030.5 576.7L1030.6 570.8L1030.8 582.5L1030.9 573.9L1031.0 582.5L1031.2 567.9L1031.3 560.5L1031.4 562.3L1031.5 576.5L1031.7 570.4L1031.8 574.2L1031.9 574.4L1032.1 565.3L1032.2 584.3L1032.3 586.1L1032.5 575.3L1032.6 566.2L1032.7 573.8L1032.9 579.7L1033.0 573.3L1033.1 570.4L1033.3 574.8L1033.4 571.9L1033.5 578.7L1033.7 590.0L1033.8 569.4L1033.9 570.6L1034.1 574.1L1034.2 574.6L1034.3 568.5L1034.5 578.2L1034.6 580.0L1034.7 576.3L1034.9 567.5L1035.0 584.7L1035.1 567.5L1035.3 579.5L1035.4 582.7L1035.5 567.1L1035.7 575.7L1035.8 584.1L1035.9 577.5L1036.1 569.2L1036.2 567.5L1036.3 578.0L1036.5 572.5L1036.6 570.5L1036.7 579.5L1036.8 572.8L1037.0 575.2L1037.1 578.8L1037.2 578.5L1037.4 574.6L1037.5 574.8L1037.6 579.0L1037.8 578.0L1037.9 568.0L1038.0 573.7L1038.2 569.4L1038.3 567.5L1038.4 571.3L1038.6 560.8L1038.7 580.8L1038.8 569.9L1039.0 577.2L1039.1 563.4L1039.2 564.3L1039.4 588.7L1039.5 581.8L1039.6 570.8L1039.8 570.0L1039.9 570.4L1040.0 575.5L1040.2 572.1L1040.3 588.7L1040.4 575.5L1040.6 568.6L1040.7 590.9L1040.8 571.0L1041.0 582.3L1041.1 569.0L1041.2 576.6L1041.4 581.2L1041.5 572.7L1041.6 581.4L1041.8 581.4L1041.9 586.0L1042.0 575.2L1042.1 571.9L1042.3 568.6L1042.4 576.0L1042.5 568.4L1042.7 574.9L1042.8 575.7L1042.9 571.4L1043.1 568.4L1043.2 577.4L1043.3 576.7L1043.5 576.1L1043.6 574.5L1043.7 581.3L1043.9 568.5L1044.0 577.8L1044.1 572.1L1044.3 580.8L1044.4 572.7L1044.5 572.5L1044.7 578.0L1044.8 562.3L1044.9 572.7L1045.1 563.8L1045.2 569.0L1045.3 579.7L1045.5 577.7L1045.6 572.3L1045.7 574.6L1045.9 574.7L1046.0 577.0L1046.1 587.7L1046.3 587.9L1046.4 590.6L1046.5 572.7L1046.7 580.1L1046.8 580.0L1046.9 576.5L1047.0 573.3L1047.2 585.1L1047.3 587.3L1047.4 582.5L1047.6 589.3L1047.7 581.8L1047.8 571.4L1048.0 582.4L1048.1 570.9L1048.2 584.6L1048.4 573.1L1048.5 577.2L1048.6 575.4L1048.8 571.4L1048.9 564.0L1049.0 573.8L1049.2 574.2L1049.3 581.8L1049.4 571.3L1049.6 576.7L1049.7 569.8L1049.8 575.3L1050.0 564.1L1050.1 588.9L1050.2 577.1L1050.4 569.5L1050.5 577.5L1050.6 580.6L1050.8 576.9L1050.9 584.7L1051.0 574.3L1051.2 559.7L1051.3 567.8L1051.4 582.8L1051.6 588.0L1051.7 577.8L1051.8 568.7L1052.0 580.8L1052.1 579.9L1052.2 569.4L1052.3 569.6L1052.5 577.6L1052.6 582.9L1052.7 585.9L1052.9 579.9L1053.0 590.7L1053.1 570.3L1053.3 579.4L1053.4 572.0L1053.5 563.3L1053.7 567.6L1053.8 583.1L1053.9 569.5L1054.1 567.7L1054.2 580.2L1054.3 581.7L1054.5 575.8L1054.6 586.3L1054.7 565.8L1054.9 591.9L1055.0 582.8L1055.1 576.9L1055.3 576.6L1055.4 574.0L1055.5 573.3L1055.7 576.5L1055.8 567.9L1055.9 590.0L1056.1 575.0L1056.2 580.0L1056.3 574.2L1056.5 573.6L1056.6 581.4L1056.7 579.5L1056.9 570.0L1057.0 572.8L1057.1 579.8L1057.3 562.2L1057.4 560.5L1057.5 585.3L1057.7 573.1L1057.8 559.3L1057.9 570.1L1058.0 573.6L1058.2 576.5L1058.3 578.8L1058.4 576.5L1058.6 578.9L1058.7 570.3L1058.8 577.8L1059.0 578.1L1059.1 583.4L1059.2 575.3L1059.4 581.3L1059.5 576.3L1059.6 568.5L1059.8 572.7L1059.9 571.8L1060.0 572.8L1060.2 574.6L1060.3 575.9L1060.4 577.2L1060.6 570.2L1060.7 582.6L1060.8 566.6L1061.0 574.8L1061.1 580.3L1061.2 578.4L1061.4 579.8L1061.5 574.0L1061.6 580.0L1061.8 567.8L1061.9 580.5L1062.0 591.0L1062.2 580.1L1062.3 589.1L1062.4 575.3L1062.6 568.4L1062.7 570.9L1062.8 584.4L1063.0 580.4L1063.1 563.8L1063.2 573.0L1063.3 575.0L1063.5 584.7L1063.6 559.6L1063.7 566.9L1063.9 574.1L1064.0 572.8L1064.1 571.1L1064.3 579.3L1064.4 582.4L1064.5 574.7L1064.7 581.7L1064.8 575.4L1064.9 574.4L1065.1 568.9L1065.2 581.0L1065.3 575.9L1065.5 576.2L1065.6 572.3L1065.7 568.4L1065.9 578.4L1066.0 580.8L1066.1 586.5L1066.3 581.5L1066.4 571.6L1066.5 574.7L1066.7 582.1L1066.8 593.0L1066.9 574.8L1067.1 571.8L1067.2 579.2L1067.3 576.8L1067.5 587.8L1067.6 583.1L1067.7 564.8L1067.9 590.4L1068.0 577.4L1068.1 573.6L1068.2 577.6L1068.4 580.7L1068.5 575.4L1068.6 575.0L1068.8 575.6L1068.9 588.2L1069.0 576.0L1069.2 581.0L1069.3 578.8L1069.4 573.6L1069.6 580.1L1069.7 569.4L1069.8 578.5L1070.0 569.2L1070.1 567.6L1070.2 567.9L1070.4 566.3L1070.5 576.0L1070.6 576.2L1070.8 569.8L1070.9 584.6L1071.0 573.7L1071.2 578.7L1071.3 577.6L1071.4 592.9L1071.6 581.3L1071.7 575.1L1071.8 569.4L1072.0 568.8L1072.1 575.6L1072.2 576.3L1072.4 580.8L1072.5 572.5L1072.6 576.7L1072.8 571.2L1072.9 564.0L1073.0 575.2L1073.2 585.5L1073.3 581.1L1073.4 585.2L1073.5 583.4L1073.7 566.8L1073.8 573.6L1073.9 585.7L1074.1 570.9L1074.2 567.1L1074.3 577.5L1074.5 579.8L1074.6 577.4L1074.7 573.2L1074.9 571.0L1075.0 567.6L1075.1 567.4L1075.3 567.6L1075.4 566.5L1075.5 570.8L1075.7 585.8L1075.8 575.9L1075.9 573.0L1076.1 577.7L1076.2 569.3L1076.3 577.5L1076.5 581.5L1076.6 565.9L1076.7 570.8L1076.9 573.6L1077.0 569.2L1077.1 568.3L1077.3 572.9L1077.4 592.3L1077.5 514.8L1077.7 578.2L1077.8 581.9L1077.9 573.8L1078.1 567.5L1078.2 578.4L1078.3 583.0L1078.5 562.3L1078.6 578.2L1078.7 583.7L1078.8 573.5L1079.0 572.3L1079.1 580.0L1079.2 570.0L1079.4 578.4L1079.5 581.5L1079.6 573.9L1079.8 570.2L1079.9 579.5L1080.0 572.9L1080.2 575.7L1080.3 557.3L1080.4 580.0L1080.6 566.3L1080.7 575.4L1080.8 575.9L1081.0 570.5L1081.1 569.4L1081.2 567.0L1081.4 572.9L1081.5 579.2L1081.6 578.8L1081.8 571.8L1081.9 571.4L1082.0 566.2L1082.2 572.4L1082.3 568.3L1082.4 565.5L1082.6 574.0L1082.7 585.4L1082.8 583.3L1083.0 585.1L1083.1 565.0L1083.2 581.0L1083.4 567.3L1083.5 571.3L1083.6 564.2L1083.8 568.7L1083.9 575.7L1084.0 576.4L1084.2 574.5L1084.3 573.9L1084.4 578.7L1084.5 575.2L1084.7 564.9L1084.8 587.0L1084.9 573.4L1085.1 581.4L1085.2 573.8L1085.3 569.7L1085.5 575.4L1085.6 580.4L1085.7 586.2L1085.9 568.1L1086.0 579.2L1086.1 571.1L1086.3 573.9L1086.4 593.2L1086.5 580.3L1086.7 573.6L1086.8 565.2L1086.9 573.2L1087.1 573.4L1087.2 584.9L1087.3 571.1L1087.5 563.7L1087.6 574.8L1087.7 576.5L1087.9 586.4L1088.0 569.5L1088.1 558.0L1088.3 570.5L1088.4 567.1L1088.5 571.6L1088.7 581.9L1088.8 566.6L1088.9 583.7L1089.1 576.5L1089.2 576.1L1089.3 569.5L1089.5 572.4L1089.6 572.6L1089.7 580.4L1089.8 584.1L1090.0 574.6L1090.1 580.0L1090.2 584.2L1090.4 583.9L1090.5 578.4L1090.6 588.0L1090.8 584.5L1090.9 586.5L1091.0 573.9L1091.2 572.4L1091.3 562.4L1091.4 585.5L1091.6 579.8L1091.7 569.3L1091.8 576.5L1092.0 577.3L1092.1 564.3L1092.2 577.4L1092.4 583.1L1092.5 584.3L1092.6 572.9L1092.8 593.3L1092.9 584.6L1093.0 581.9L1093.2 571.6L1093.3 571.4L1093.4 579.5L1093.6 571.1L1093.7 571.4L1093.8 587.5L1094.0 577.2L1094.1 572.4L1094.2 579.0L1094.4 590.0L1094.5 577.0L1094.6 578.1L1094.8 565.1L1094.9 590.4L1095.0 558.6L1095.1 582.9L1095.3 569.0L1095.4 567.3L1095.5 568.8L1095.7 574.1L1095.8 583.2L1095.9 571.1L1096.1 514.8L1096.2 592.7L1096.3 557.2L1096.5 570.6L1096.6 563.6L1096.7 581.4L1096.9 565.8L1097.0 565.0L1097.1 565.2L1097.3 575.1L1097.4 583.5L1097.5 576.2L1097.7 590.5L1097.8 587.0L1097.9 574.4L1098.1 582.0L1098.2 576.2L1098.3 575.8L1098.5 562.9L1098.6 566.9L1098.7 575.3L1098.9 588.7L1099.0 580.5L1099.1 577.4L1099.3 569.3L1099.4 583.7L1099.5 577.0L1099.7 584.3L1099.8 574.3L1099.9 564.8L1100.0 580.3L1100.2 573.6L1100.3 581.3L1100.4 583.1L1100.6 583.7L1100.7 565.9L1100.8 560.2L1101.0 572.0L1101.1 580.0L1101.2 570.6L1101.4 514.8L1101.5 570.0L1101.6 573.2L1101.8 573.2L1101.9 571.2L1102.0 579.1L1102.2 577.8L1102.3 587.1L1102.4 578.1L1102.6 585.0L1102.7 576.0L1102.8 581.7L1103.0 574.4L1103.1 572.2L1103.2 585.0L1103.4 580.7L1103.5 581.6L1103.6 570.3L1103.8 570.6L1103.9 569.7L1104.0 577.5L1104.2 565.8L1104.3 585.6L1104.4 565.6L1104.6 579.6L1104.7 594.5L1104.8 558.4L1105.0 565.1L1105.1 582.3L1105.2 573.9L1105.3 576.5L1105.5 574.4L1105.6 585.4L1105.7 579.8L1105.9 572.1L1106.0 573.6L1106.1 567.5L1106.3 574.5L1106.4 560.3L1106.5 580.0L1106.7 573.4L1106.8 588.5L1106.9 583.8L1107.1 566.7L1107.2 581.6L1107.3 571.7L1107.5 575.4L1107.6 582.3L1107.7 577.4L1107.9 578.6L1108.0 578.4L1108.1 570.3L1108.3 570.9L1108.4 579.1L1108.5 581.4L1108.7 573.2L1108.8 575.7L1108.9 568.5L1109.1 558.3L1109.2 569.7L1109.3 575.2L1109.5 576.2L1109.6 581.0L1109.7 581.4L1109.9 582.1L1110.0 577.8L1110.1 578.0L1110.3 570.3L1110.4 577.8L1110.5 576.4L1110.7 583.6L1110.8 564.7L1110.9 571.8L1111.0 563.8L1111.2 570.0L1111.3 565.7L1111.4 576.7L1111.6 570.5L1111.7 558.0L1111.8 583.6L1112.0 567.6L1112.1 564.3L1112.2 572.4L1112.4 570.2L1112.5 567.0L1112.6 579.7L1112.8 572.4L1112.9 581.2L1113.0 579.9L1113.2 579.4L1113.3 576.0L1113.4 574.1L1113.6 572.1L1113.7 585.2L1113.8 562.3L1114.0 567.6L1114.1 570.3L1114.2 577.6L1114.4 575.6L1114.5 571.5L1114.6 572.4L1114.8 587.1L1114.9 570.2L1115.0 556.2L1115.2 588.3L1115.3 568.6L1115.4 572.6L1115.6 575.8L1115.7 566.2L1115.8 583.5L1116.0 574.0L1116.1 565.6L1116.2 576.4L1116.3 578.0L1116.5 574.3L1116.6 578.2L1116.7 565.0L1116.9 581.5L1117.0 569.4L1117.1 584.0L1117.3 570.7L1117.4 575.8L1117.5 593.7L1117.7 575.0L1117.8 582.7L1117.9 578.2L1118.1 565.1L1118.2 583.1L1118.3 582.7L1118.5 565.7L1118.6 604.1L1118.7 565.1L1118.9 572.9L1119.0 581.4L1119.1 575.5L1119.3 567.1L1119.4 568.9L1119.5 575.0L1119.7 574.7L1119.8 575.8L1119.9 579.2L1120.1 562.5L1120.2 575.0L1120.3 583.2L1120.5 578.4L1120.6 570.3L1120.7 570.9L1120.9 576.0L1121.0 579.8L1121.1 574.8L1121.2 587.1L1121.4 584.4L1121.5 569.8L1121.6 578.5L1121.8 572.6L1121.9 567.1L1122.0 570.8L1122.2 574.9L1122.3 561.3L1122.4 570.7L1122.6 577.6L1122.7 570.3L1122.8 572.4L1123.0 581.2L1123.1 574.5L1123.2 576.2L1123.4 589.2L1123.5 576.2L1123.6 577.0L1123.8 578.2L1123.9 586.9L1124.0 577.6L1124.2 575.3L1124.3 574.3L1124.4 583.2L1124.6 570.9L1124.7 583.8L1124.8 576.6L1125.0 566.6L1125.1 580.0L1125.2 578.7L1125.4 568.1L1125.5 577.8L1125.6 577.1L1125.8 573.6L1125.9 568.2L1126.0 590.9L1126.2 581.0L1126.3 582.3L1126.4 582.8L1126.5 581.2L1126.7 581.1L1126.8 573.1L1126.9 581.4L1127.1 574.2L1127.2 572.4L1127.3 580.3L1127.5 574.2L1127.6 564.5L1127.7 572.9L1127.9 579.6L1128.0 575.5L1128.1 581.6L1128.3 573.3L1128.4 569.5L1128.5 580.9L1128.7 576.5L1128.8 567.9L1128.9 578.6L1129.1 573.8L1129.2 582.4L1129.3 580.9L1129.5 578.7L1129.6 561.3L1129.7 591.0L1129.9 578.7L1130.0 579.0L1130.1 576.2L1130.3 570.9L1130.4 573.8L1130.5 562.1L1130.7 573.7L1130.8 565.9L1130.9 573.3L1131.1 571.2L1131.2 585.1L1131.3 575.9L1131.5 575.5L1131.6 576.7L1131.7 590.1L1131.8 569.5L1132.0 577.7L1132.1 578.1L1132.2 576.8L1132.4 576.6L1132.5 572.4L1132.6 583.9L1132.8 581.5L1132.9 573.2L1133.0 574.1L1133.2 577.6L1133.3 579.0L1133.4 580.9L1133.6 575.4L1133.7 574.8L1133.8 582.4L1134.0 565.4L1134.1 569.7L1134.2 578.2L1134.4 570.1L1134.5 585.3L1134.6 587.2L1134.8 584.1L1134.9 577.9L1135.0 577.3L1135.2 578.6L1135.3 574.4L1135.4 590.0L1135.6 571.9L1135.7 585.0L1135.8 514.8L1136.0 577.9L1136.1 583.1L1136.2 584.6L1136.4 582.1L1136.5 575.1L1136.6 571.3L1136.8 571.5L1136.9 582.0L1137.0 580.6L1137.2 581.5L1137.3 572.2L1137.4 589.3L1137.5 567.2L1137.7 578.4L1137.8 580.5L1137.9 572.9L1138.1 568.5L1138.2 572.9L1138.3 568.4L1138.5 574.2L1138.6 567.3L1138.7 567.2L1138.9 575.7L1139.0 566.0L1139.1 574.0L1139.3 574.5L1139.4 581.5L1139.5 577.0L1139.7 570.1L1139.8 584.2L1139.9 570.9L1140.1 572.8L1140.2 573.3L1140.3 590.5L1140.5 575.7L1140.6 570.9L1140.7 580.4L1140.9 574.4L1141.0 591.7L1141.1 570.8L1141.3 579.7L1141.4 569.5L1141.5 588.0L1141.7 570.7L1141.8 576.7L1141.9 569.9L1142.1 581.5L1142.2 579.3L1142.3 560.9L1142.5 580.8L1142.6 580.0L1142.7 576.9L1142.8 582.2L1143.0 567.5L1143.1 564.2L1143.2 579.9L1143.4 587.1L1143.5 567.6L1143.6 568.0L1143.8 569.8L1143.9 567.7L1144.0 581.1L1144.2 576.2L1144.3 584.7L1144.4 585.0L1144.6 568.8L1144.7 579.7L1144.8 560.7L1145.0 574.5L1145.1 579.5L1145.2 570.0L1145.4 563.7L1145.5 571.9L1145.6 583.6L1145.8 572.7L1145.9 566.4L1146.0 578.5L1146.2 580.4L1146.3 568.6L1146.4 574.1L1146.6 582.7L1146.7 577.7L1146.8 580.3L1147.0 573.1L1147.1 574.3L1147.2 567.8L1147.4 570.5L1147.5 586.0L1147.6 572.4L1147.8 569.4L1147.9 572.1L1148.0 568.5L1148.1 578.9L1148.3 581.7L1148.4 569.2L1148.5 582.5L1148.7 590.2L1148.8 568.6L1148.9 580.1L1149.1 577.2L1149.2 584.8L1149.3 584.3L1149.5 583.1L1149.6 577.5L1149.7 572.7L1149.9 591.1L1150.0 570.3L1150.1 583.3L1150.3 582.5L1150.4 614.2L1150.5 575.5L1150.7 585.8L1150.8 563.4L1150.9 581.0L1151.1 573.4L1151.2 578.0L1151.3 566.1L1151.5 578.2L1151.6 568.7L1151.7 580.2L1151.9 568.0L1152.0 580.4L1152.1 577.5L1152.3 563.1L1152.4 573.0L1152.5 574.3L1152.7 560.9L1152.8 572.7L1152.9 580.7L1153.0 570.4L1153.2 583.3L1153.3 567.9L1153.4 567.4L1153.6 579.0L1153.7 579.4L1153.8 573.9L1154.0 574.9L1154.1 581.9L1154.2 571.4L1154.4 590.2L1154.5 578.0L1154.6 577.8L1154.8 576.9L1154.9 573.1L1155.0 589.3L1155.2 571.3L1155.3 576.3L1155.4 579.6L1155.6 584.6L1155.7 583.3L1155.8 572.7L1156.0 600.4L1156.1 574.6L1156.2 568.3L1156.4 568.5L1156.5 565.2L1156.6 577.1L1156.8 582.6L1156.9 568.6L1157.0 573.1L1157.2 567.9L1157.3 574.9L1157.4 567.5L1157.6 585.2L1157.7 570.5L1157.8 571.8L1158.0 572.5L1158.1 573.5L1158.2 573.6L1158.3 568.8L1158.5 578.6L1158.6 564.1L1158.7 575.7L1158.9 568.8L1159.0 575.6L1159.1 576.7L1159.3 562.2L1159.4 577.2L1159.5 584.0L1159.7 580.0L1159.8 577.2L1159.9 561.5L1160.1 573.7L1160.2 569.1L1160.3 582.0L1160.5 572.8L1160.6 570.8L1160.7 563.7L1160.9 579.9L1161.0 571.2L1161.1 573.1L1161.3 582.2L1161.4 575.1L1161.5 576.9L1161.7 591.3L1161.8 571.2L1161.9 571.6L1162.1 578.1L1162.2 584.4L1162.3 565.7L1162.5 573.3L1162.6 568.6L1162.7 566.2L1162.9 578.7L1163.0 569.9L1163.1 576.7L1163.3 575.4L1163.4 575.6L1163.5 575.0L1163.7 568.0L1163.8 574.2L1163.9 576.1L1164.0 576.9L1164.2 572.9L1164.3 581.3L1164.4 578.5L1164.6 575.4L1164.7 579.0L1164.8 575.8L1165.0 579.3L1165.1 562.4L1165.2 566.7L1165.4 572.2L1165.5 575.4L1165.6 561.3L1165.8 573.0L1165.9 575.6L1166.0 573.1L1166.2 573.1L1166.3 566.2L1166.4 575.1L1166.6 561.8L1166.7 581.2L1166.8 570.6L1167.0 582.0L1167.1 563.6L1167.2 577.3L1167.4 575.4L1167.5 569.2L1167.6 567.1L1167.8 582.8L1167.9 577.4L1168.0 584.8L1168.2 574.1L1168.3 575.7L1168.4 577.5L1168.6 579.8L1168.7 577.7L1168.8 580.2L1169.0 571.7L1169.1 565.5L1169.2 588.6L1169.3 575.8L1169.5 577.9L1169.6 571.9L1169.7 581.7L1169.9 576.0L1170.0 582.3L1170.1 570.6L1170.3 574.4L1170.4 576.1L1170.5 572.7L1170.7 576.7L1170.8 585.9L1170.9 571.3L1171.1 573.2L1171.2 576.1L1171.3 568.8L1171.5 567.4L1171.6 582.7L1171.7 580.5L1171.9 565.3L1172.0 566.1L1172.1 580.2L1172.3 583.3L1172.4 591.7L1172.5 578.5L1172.7 596.4L1172.8 574.8L1172.9 584.0L1173.1 583.5L1173.2 569.3L1173.3 579.8L1173.5 575.5L1173.6 571.1L1173.7 569.9L1173.9 577.4L1174.0 574.7L1174.1 580.8L1174.2 564.0L1174.4 570.9L1174.5 588.7L1174.6 575.0L1174.8 570.5L1174.9 572.0L1175.0 563.5L1175.2 566.4L1175.3 578.8L1175.4 575.6L1175.6 584.0L1175.7 573.4L1175.8 574.1L1176.0 558.0L1176.1 574.4L1176.2 589.7L1176.4 579.7L1176.5 574.3L1176.6 583.8L1176.8 581.1L1176.9 577.6L1177.0 572.9L1177.2 576.2L1177.3 581.2L1177.4 570.1L1177.6 578.8L1177.7 578.5L1177.8 584.7L1178.0 580.5L1178.1 570.9L1178.2 598.9L1178.4 575.5L1178.5 570.5L1178.6 577.7L1178.8 577.2L1178.9 582.8L1179.0 566.8L1179.2 568.1L1179.3 573.5L1179.4 587.3L1179.5 582.4L1179.7 568.9L1179.8 564.3L1179.9 573.1L1180.1 567.2L1180.2 579.3L1180.3 576.3L1180.5 575.0L1180.6 572.3L1180.7 585.7L1180.9 569.1L1181.0 566.7L1181.1 583.1L1181.3 584.5L1181.4 572.8L1181.5 579.6L1181.7 591.7L1181.8 569.9L1181.9 574.0L1182.1 578.3L1182.2 561.7L1182.3 574.1L1182.5 580.3L1182.6 574.4L1182.7 582.3L1182.9 580.4L1183.0 572.6L1183.1 578.9" fill="none" stroke="#00f" stroke-width="1.8" stroke-linejoin="bevel" clip-path="url(#c3)"/>
<rect x="1109" y="519.8" width="72.5" height="16.100000000000023" rx="2" fill="#fff" fill-opacity="0.8" stroke="#ccc" stroke-width="1"/>
<line x1="1111.3" y1="527.85" x2="1133.8" y2="527.85" stroke="#00f" stroke-width="1.5"/>
<text x="1136.2" y="531.6499999999999" font-size="10.4" text-anchor="start" textLength="41.6" lengthAdjust="spacingAndGlyphs">y=1024</text>
<rect x="911.05" y="516.8" width="273.85000000000014" height="120.20000000000005" fill="none" stroke="#000" stroke-width="1.7"/>
<text x="896.4" y="528.6" font-size="10.4" text-anchor="end">100</text>
<text x="896.4" y="553.7" font-size="10.4" text-anchor="end">50</text>
<text x="896.4" y="578.8" font-size="10.4" text-anchor="end">0</text>
<text x="896.4" y="603.9" font-size="10.4" text-anchor="end">−50</text>
<text x="896.4" y="629.0" font-size="10.4" text-anchor="end">−100</text>
<text x="911.9" y="659.9" font-size="10.4" text-anchor="middle">0</text>
<text x="978.15" y="659.9" font-size="10.4" text-anchor="middle">500</text>
<text x="1044.4" y="659.9" font-size="10.4" text-anchor="middle">1000</text>
<text x="1110.65" y="659.9" font-size="10.4" text-anchor="middle">1500</text>
<text x="1176.9" y="659.9" font-size="10.4" text-anchor="middle">2000</text>
<path d="M904.4499999999999,524.80H911.05M904.4499999999999,549.90H911.05M904.4499999999999,575.00H911.05M904.4499999999999,600.10H911.05M904.4499999999999,625.20H911.05M911.90,637.0V643.8M978.15,637.0V643.8M1044.40,637.0V643.8M1110.65,637.0V643.8M1176.90,637.0V643.8" stroke="#000" stroke-width="1.5" fill="none"/>
<text x="1047.4" y="678.3" font-size="10.4" text-anchor="middle">X</text>
<text x="0" y="0" font-size="10.4" text-anchor="middle" transform="translate(857.2,577.7) rotate(-90)" textLength="34.7" lengthAdjust="spacingAndGlyphs">counts</text>
<text x="0" y="0" font-size="10.4" text-anchor="middle" transform="translate(1194.3,575.2) rotate(90)" textLength="39.8" lengthAdjust="spacingAndGlyphs">cut in x</text>
<clipPath id="c4"><rect x="911.05" y="688.9" width="273.85000000000014" height="120.10000000000002"/></clipPath>
<path d="M911.9 811.0L912.0 811.0L912.2 768.5L912.3 751.7L912.4 788.7L912.6 769.1L912.7 781.2L912.8 771.3L913.0 811.0L913.1 796.4L913.2 807.1L913.4 794.3L913.5 811.0L913.6 807.5L913.8 754.9L913.9 811.0L914.0 774.9L914.2 811.0L914.3 769.9L914.4 788.7L914.5 766.1L914.7 773.8L914.8 782.6L914.9 777.3L915.1 792.3L915.2 796.7L915.3 805.7L915.5 764.9L915.6 792.0L915.7 752.1L915.9 758.8L916.0 752.5L916.1 765.8L916.3 779.2L916.4 753.8L916.5 765.4L916.7 808.3L916.8 777.5L916.9 770.3L917.1 764.7L917.2 804.6L917.3 784.2L917.5 752.5L917.6 766.0L917.7 787.4L917.9 762.0L918.0 751.4L918.1 750.1L918.3 788.9L918.4 811.0L918.5 811.0L918.7 765.1L918.8 772.1L918.9 793.2L919.1 763.2L919.2 763.9L919.3 767.5L919.5 749.5L919.6 802.8L919.7 772.1L919.9 740.7L920.0 759.3L920.1 774.9L920.2 751.7L920.4 761.4L920.5 789.3L920.6 766.1L920.8 751.8L920.9 782.9L921.0 798.9L921.2 770.0L921.3 754.4L921.4 806.4L921.6 753.6L921.7 789.1L921.8 775.9L922.0 759.6L922.1 791.8L922.2 782.0L922.4 747.8L922.5 760.5L922.6 784.8L922.8 769.2L922.9 768.8L923.0 760.5L923.2 769.6L923.3 778.1L923.4 762.0L923.6 768.1L923.7 761.5L923.8 750.1L924.0 756.3L924.1 770.3L924.2 787.2L924.4 775.1L924.5 787.5L924.6 767.7L924.8 756.8L924.9 779.0L925.0 763.6L925.1 777.3L925.3 749.3L925.4 764.2L925.5 787.2L925.7 786.9L925.8 752.0L925.9 754.9L926.1 748.4L926.2 734.0L926.3 757.7L926.5 755.5L926.6 773.2L926.7 764.4L926.9 760.1L927.0 792.6L927.1 732.5L927.3 765.3L927.4 748.4L927.5 744.1L927.7 747.6L927.8 775.2L927.9 768.1L928.1 760.9L928.2 761.6L928.3 767.8L928.5 770.5L928.6 756.7L928.7 754.3L928.9 759.6L929.0 754.9L929.1 768.5L929.3 756.3L929.4 753.3L929.5 751.7L929.7 785.8L929.8 771.9L929.9 762.1L930.1 762.8L930.2 768.8L930.3 761.2L930.4 757.2L930.6 760.5L930.7 783.2L930.8 784.1L931.0 760.4L931.1 753.1L931.2 763.7L931.4 775.8L931.5 771.8L931.6 758.5L931.8 766.3L931.9 739.4L932.0 748.2L932.2 753.2L932.3 749.8L932.4 776.9L932.6 755.9L932.7 773.7L932.8 781.7L933.0 759.4L933.1 775.8L933.2 763.4L933.4 766.4L933.5 772.5L933.6 764.6L933.8 750.4L933.9 747.1L934.0 767.3L934.2 731.7L934.3 759.2L934.4 746.3L934.6 749.6L934.7 766.0L934.8 759.4L935.0 752.7L935.1 788.1L935.2 765.8L935.4 763.1L935.5 762.0L935.6 759.6L935.8 766.8L935.9 744.3L936.0 766.3L936.1 745.6L936.3 770.6L936.4 753.5L936.5 758.4L936.7 746.9L936.8 748.6L936.9 757.5L937.1 739.3L937.2 781.2L937.3 761.5L937.5 766.4L937.6 757.5L937.7 743.7L937.9 775.6L938.0 753.7L938.1 753.5L938.3 752.0L938.4 751.7L938.5 783.4L938.7 743.8L938.8 751.8L938.9 768.6L939.1 766.1L939.2 747.1L939.3 773.1L939.5 765.6L939.6 746.8L939.7 760.4L939.9 747.2L940.0 758.7L940.1 746.8L940.3 751.0L940.4 753.0L940.5 770.7L940.7 748.9L940.8 758.7L940.9 763.4L941.0 743.1L941.2 768.3L941.3 745.2L941.4 769.1L941.6 738.1L941.7 767.1L941.8 769.8L942.0 759.3L942.1 748.9L942.2 753.3L942.4 748.6L942.5 761.2L942.6 746.2L942.8 752.4L942.9 762.4L943.0 758.7L943.2 762.5L943.3 741.7L943.4 744.7L943.6 765.3L943.7 770.0L943.8 738.6L944.0 764.8L944.1 746.8L944.2 756.3L944.4 772.3L944.5 751.0L944.6 759.0L944.8 738.5L944.9 742.3L945.0 759.0L945.2 751.2L945.3 740.6L945.4 758.7L945.6 760.7L945.7 764.5L945.8 758.5L946.0 756.5L946.1 751.9L946.2 749.0L946.4 766.4L946.5 741.9L946.6 740.2L946.7 762.2L946.9 770.1L947.0 753.7L947.1 768.8L947.3 760.3L947.4 758.2L947.5 738.5L947.7 760.7L947.8 762.1L947.9 751.8L948.1 768.1L948.2 760.2L948.3 740.2L948.5 743.4L948.6 765.9L948.7 768.7L948.9 741.0L949.0 754.0L949.1 755.7L949.3 747.7L949.4 763.3L949.5 768.4L949.7 744.5L949.8 765.0L949.9 758.1L950.1 761.2L950.2 750.3L950.3 756.4L950.5 752.1L950.6 763.2L950.7 749.6L950.9 752.1L951.0 763.7L951.1 768.1L951.3 770.0L951.4 750.8L951.5 734.9L951.6 762.9L951.8 764.8L951.9 748.0L952.0 750.1L952.2 755.4L952.3 759.7L952.4 768.5L952.6 751.7L952.7 740.7L952.8 750.3L953.0 777.8L953.1 754.7L953.2 745.3L953.4 740.5L953.5 749.1L953.6 764.2L953.8 746.6L953.9 742.3L954.0 759.6L954.2 762.9L954.3 747.7L954.4 750.4L954.6 741.8L954.7 747.2L954.8 756.1L955.0 757.3L955.1 757.4L955.2 761.3L955.4 753.4L955.5 755.7L955.6 757.8L955.8 758.6L955.9 752.3L956.0 753.4L956.2 743.2L956.3 748.2L956.4 767.5L956.6 743.4L956.7 761.6L956.8 760.1L956.9 746.2L957.1 743.8L957.2 734.8L957.3 751.9L957.5 746.6L957.6 749.0L957.7 761.5L957.9 742.7L958.0 772.4L958.1 746.6L958.3 752.0L958.4 755.6L958.5 758.3L958.7 742.1L958.8 749.2L958.9 756.6L959.1 746.8L959.2 748.4L959.3 756.9L959.5 758.7L959.6 760.6L959.7 739.3L959.9 751.2L960.0 754.4L960.1 775.2L960.3 752.4L960.4 748.2L960.5 750.2L960.7 753.2L960.8 747.5L960.9 758.6L961.1 760.0L961.2 744.7L961.3 757.1L961.5 759.0L961.6 749.9L961.7 751.8L961.9 751.8L962.0 752.4L962.1 748.0L962.2 757.5L962.4 756.5L962.5 744.8L962.6 748.1L962.8 738.0L962.9 759.9L963.0 740.9L963.2 742.7L963.3 753.4L963.4 750.7L963.6 745.7L963.7 734.2L963.8 764.7L964.0 748.6L964.1 758.9L964.2 753.3L964.4 746.1L964.5 744.4L964.6 760.4L964.8 752.8L964.9 750.2L965.0 762.9L965.2 750.9L965.3 749.4L965.4 755.2L965.6 747.1L965.7 761.6L965.8 749.5L966.0 752.9L966.1 738.1L966.2 760.2L966.4 779.1L966.5 765.4L966.6 742.8L966.8 749.5L966.9 743.8L967.0 755.4L967.2 753.4L967.3 756.5L967.4 754.2L967.5 744.9L967.7 747.8L967.8 738.5L967.9 758.1L968.1 755.3L968.2 756.8L968.3 740.4L968.5 763.0L968.6 749.8L968.7 739.1L968.9 749.5L969.0 753.3L969.1 767.2L969.3 755.4L969.4 768.9L969.5 755.6L969.7 747.6L969.8 757.0L969.9 740.9L970.1 748.3L970.2 756.3L970.3 755.2L970.5 766.7L970.6 750.1L970.7 732.0L970.9 753.6L971.0 746.4L971.1 752.1L971.3 741.3L971.4 746.7L971.5 753.3L971.7 770.2L971.8 752.8L971.9 744.2L972.1 774.2L972.2 743.5L972.3 752.2L972.5 768.6L972.6 746.5L972.7 745.6L972.9 754.5L973.0 754.9L973.1 746.6L973.2 760.3L973.4 746.3L973.5 780.8L973.6 771.4L973.8 748.9L973.9 753.3L974.0 757.2L974.2 745.6L974.3 758.6L974.4 746.5L974.6 745.1L974.7 749.1L974.8 762.6L975.0 756.5L975.1 740.7L975.2 752.0L975.4 755.4L975.5 750.4L975.6 750.3L975.8 749.8L975.9 748.4L976.0 756.9L976.2 749.7L976.3 752.1L976.4 747.5L976.6 771.1L976.7 752.5L976.8 759.8L977.0 741.5L977.1 736.7L977.2 738.5L977.4 744.3L977.5 754.9L977.6 741.8L977.8 752.9L977.9 743.4L978.0 759.9L978.1 753.8L978.3 744.8L978.4 735.7L978.5 768.1L978.7 734.4L978.8 729.3L978.9 758.7L979.1 751.2L979.2 758.8L979.3 751.1L979.5 756.2L979.6 750.6L979.7 743.3L979.9 742.4L980.0 749.1L980.1 750.8L980.3 748.0L980.4 753.5L980.5 742.9L980.7 747.9L980.8 751.9L980.9 761.1L981.1 760.5L981.2 735.7L981.3 751.7L981.5 763.9L981.6 742.3L981.7 756.8L981.9 784.1L982.0 751.2L982.1 743.8L982.3 754.7L982.4 740.2L982.5 742.6L982.7 751.2L982.8 767.5L982.9 757.8L983.1 745.7L983.2 743.3L983.3 757.5L983.4 755.7L983.6 747.0L983.7 768.6L983.8 768.4L984.0 751.5L984.1 745.9L984.2 755.2L984.4 768.0L984.5 748.9L984.6 778.2L984.8 744.3L984.9 749.6L985.0 748.1L985.2 744.6L985.3 754.4L985.4 742.2L985.6 738.2L985.7 747.0L985.8 748.0L986.0 771.8L986.1 741.2L986.2 746.8L986.4 758.5L986.5 750.4L986.6 754.0L986.8 753.2L986.9 747.6L987.0 739.1L987.2 753.0L987.3 747.5L987.4 766.1L987.6 747.3L987.7 750.1L987.8 744.5L988.0 751.7L988.1 752.0L988.2 755.8L988.4 752.1L988.5 771.6L988.6 759.3L988.8 740.9L988.9 756.6L989.0 737.7L989.1 760.8L989.3 744.5L989.4 757.6L989.5 746.5L989.7 756.6L989.8 750.2L989.9 750.1L990.1 751.4L990.2 743.7L990.3 739.1L990.5 754.9L990.6 744.4L990.7 746.5L990.9 748.0L991.0 736.9L991.1 766.6L991.3 758.3L991.4 766.0L991.5 750.8L991.7 752.9L991.8 720.7L991.9 746.2L992.1 735.4L992.2 742.0L992.3 754.7L992.5 744.0L992.6 734.9L992.7 747.1L992.9 746.4L993.0 743.8L993.1 762.2L993.3 754.8L993.4 751.5L993.5 745.3L993.7 756.7L993.8 750.3L993.9 752.8L994.0 752.0L994.2 749.6L994.3 750.6L994.4 747.2L994.6 763.9L994.7 757.3L994.8 746.6L995.0 764.3L995.1 746.8L995.2 759.0L995.4 758.4L995.5 742.4L995.6 754.3L995.8 757.0L995.9 753.7L996.0 747.2L996.2 728.9L996.3 769.3L996.4 752.7L996.6 749.7L996.7 742.4L996.8 751.2L997.0 773.4L997.1 741.7L997.2 758.2L997.4 748.4L997.5 762.0L997.6 757.5L997.8 754.3L997.9 742.9L998.0 741.1L998.2 754.2L998.3 746.4L998.4 750.8L998.6 748.9L998.7 747.9L998.8 772.2L999.0 759.3L999.1 754.6L999.2 745.5L999.4 749.6L999.5 756.5L999.6 734.3L999.7 755.2L999.9 743.2L1000.0 750.3L1000.1 740.0L1000.3 767.3L1000.4 734.2L1000.5 752.8L1000.7 760.0L1000.8 751.9L1000.9 732.0L1001.1 744.0L1001.2 759.7L1001.3 754.0L1001.5 739.7L1001.6 766.5L1001.7 749.7L1001.9 750.0L1002.0 732.4L1002.1 751.5L1002.3 737.8L1002.4 754.5L1002.5 756.3L1002.7 741.0L1002.8 745.6L1002.9 765.1L1003.1 747.5L1003.2 742.7L1003.3 754.9L1003.5 746.1L1003.6 745.9L1003.7 752.5L1003.9 755.3L1004.0 755.3L1004.1 750.2L1004.3 761.6L1004.4 753.1L1004.5 765.4L1004.6 748.2L1004.8 748.4L1004.9 757.8L1005.0 741.9L1005.2 736.1L1005.3 740.8L1005.4 765.6L1005.6 739.2L1005.7 749.8L1005.8 749.3L1006.0 754.4L1006.1 748.6L1006.2 737.4L1006.4 744.9L1006.5 753.6L1006.6 754.8L1006.8 753.0L1006.9 743.7L1007.0 734.8L1007.2 758.2L1007.3 747.4L1007.4 750.7L1007.6 754.9L1007.7 745.2L1007.8 745.4L1008.0 763.8L1008.1 757.0L1008.2 739.3L1008.4 746.4L1008.5 744.7L1008.6 753.6L1008.8 751.3L1008.9 747.8L1009.0 754.5L1009.2 759.3L1009.3 749.1L1009.4 743.2L1009.6 759.3L1009.7 739.7L1009.8 743.1L1010.0 756.7L1010.1 748.0L1010.2 749.0L1010.3 743.6L1010.5 744.8L1010.6 759.1L1010.7 759.4L1010.9 740.5L1011.0 750.7L1011.1 747.7L1011.3 746.5L1011.4 736.2L1011.5 758.3L1011.7 739.4L1011.8 758.6L1011.9 743.0L1012.1 738.3L1012.2 760.6L1012.3 745.7L1012.5 751.0L1012.6 751.1L1012.7 747.1L1012.9 757.8L1013.0 758.8L1013.1 743.8L1013.3 745.1L1013.4 753.9L1013.5 761.6L1013.7 730.4L1013.8 739.9L1013.9 749.8L1014.1 757.3L1014.2 754.8L1014.3 746.3L1014.5 756.7L1014.6 736.4L1014.7 746.9L1014.9 744.8L1015.0 757.2L1015.1 755.5L1015.2 754.4L1015.4 747.1L1015.5 749.7L1015.6 752.0L1015.8 746.5L1015.9 747.3L1016.0 736.6L1016.2 752.4L1016.3 757.1L1016.4 749.7L1016.6 739.0L1016.7 752.4L1016.8 747.7L1017.0 753.6L1017.1 746.5L1017.2 745.6L1017.4 773.1L1017.5 751.3L1017.6 740.9L1017.8 739.3L1017.9 740.8L1018.0 741.1L1018.2 751.5L1018.3 751.7L1018.4 743.3L1018.6 759.7L1018.7 748.1L1018.8 763.9L1019.0 751.2L1019.1 753.5L1019.2 759.1L1019.4 743.3L1019.5 756.7L1019.6 750.7L1019.8 749.8L1019.9 754.5L1020.0 736.6L1020.2 754.3L1020.3 747.8L1020.4 760.5L1020.5 752.5L1020.7 751.9L1020.8 750.4L1020.9 752.5L1021.1 749.5L1021.2 736.7L1021.3 750.6L1021.5 748.7L1021.6 753.1L1021.7 729.7L1021.9 737.0L1022.0 743.3L1022.1 742.6L1022.3 754.8L1022.4 751.4L1022.5 745.9L1022.7 746.4L1022.8 756.2L1022.9 755.4L1023.1 744.5L1023.2 745.0L1023.3 766.7L1023.5 747.5L1023.6 738.0L1023.7 753.0L1023.9 745.7L1024.0 762.4L1024.1 741.6L1024.3 758.1L1024.4 758.3L1024.5 751.8L1024.7 731.1L1024.8 753.6L1024.9 758.5L1025.1 744.3L1025.2 751.9L1025.3 735.7L1025.5 759.0L1025.6 762.7L1025.7 750.1L1025.8 744.5L1026.0 747.3L1026.1 759.4L1026.2 761.0L1026.4 755.6L1026.5 749.1L1026.6 742.4L1026.8 744.8L1026.9 755.3L1027.0 757.9L1027.2 740.8L1027.3 740.3L1027.4 727.5L1027.6 749.8L1027.7 736.7L1027.8 759.0L1028.0 752.4L1028.1 754.6L1028.2 753.0L1028.4 757.3L1028.5 753.6L1028.6 748.9L1028.8 752.7L1028.9 743.7L1029.0 748.3L1029.2 747.5L1029.3 736.8L1029.4 745.0L1029.6 746.1L1029.7 748.8L1029.8 747.3L1030.0 743.7L1030.1 754.9L1030.2 739.5L1030.4 735.7L1030.5 739.0L1030.6 752.2L1030.8 763.3L1030.9 751.4L1031.0 746.5L1031.2 742.8L1031.3 749.6L1031.4 749.9L1031.5 736.1L1031.7 754.0L1031.8 739.8L1031.9 740.5L1032.1 761.0L1032.2 745.7L1032.3 752.4L1032.5 755.9L1032.6 763.9L1032.7 764.2L1032.9 744.9L1033.0 750.8L1033.1 745.3L1033.3 761.9L1033.4 750.5L1033.5 750.0L1033.7 762.8L1033.8 763.4L1033.9 744.7L1034.1 746.7L1034.2 757.0L1034.3 748.9L1034.5 752.6L1034.6 734.5L1034.7 758.1L1034.9 743.5L1035.0 735.7L1035.1 747.3L1035.3 737.3L1035.4 770.3L1035.5 736.5L1035.7 749.2L1035.8 765.2L1035.9 742.4L1036.1 740.0L1036.2 738.7L1036.3 739.2L1036.5 748.2L1036.6 755.0L1036.7 751.3L1036.8 750.4L1037.0 744.4L1037.1 752.1L1037.2 746.9L1037.4 740.9L1037.5 744.8L1037.6 732.1L1037.8 734.5L1037.9 758.1L1038.0 753.4L1038.2 759.2L1038.3 757.9L1038.4 743.4L1038.6 757.6L1038.7 758.0L1038.8 749.6L1039.0 742.6L1039.1 756.6L1039.2 750.9L1039.4 741.1L1039.5 743.8L1039.6 745.5L1039.8 740.4L1039.9 757.2L1040.0 746.7L1040.2 755.4L1040.3 740.2L1040.4 742.4L1040.6 757.1L1040.7 737.3L1040.8 758.8L1041.0 739.9L1041.1 746.7L1041.2 755.7L1041.4 758.2L1041.5 750.6L1041.6 748.4L1041.8 753.5L1041.9 743.4L1042.0 759.8L1042.1 748.7L1042.3 747.7L1042.4 766.5L1042.5 745.4L1042.7 759.1L1042.8 771.2L1042.9 753.2L1043.1 749.8L1043.2 741.5L1043.3 751.5L1043.5 737.0L1043.6 739.1L1043.7 742.4L1043.9 737.3L1044.0 747.5L1044.1 753.3L1044.3 743.3L1044.4 741.8L1044.5 746.0L1044.7 750.6L1044.8 761.3L1044.9 743.5L1045.1 744.5L1045.2 762.3L1045.3 747.3L1045.5 743.6L1045.6 749.2L1045.7 741.9L1045.9 741.6L1046.0 762.8L1046.1 750.0L1046.3 744.2L1046.4 742.5L1046.5 736.9L1046.7 764.5L1046.8 749.5L1046.9 742.6L1047.0 738.1L1047.2 734.8L1047.3 756.1L1047.4 750.6L1047.6 757.9L1047.7 741.1L1047.8 760.8L1048.0 739.4L1048.1 741.1L1048.2 744.4L1048.4 767.1L1048.5 753.3L1048.6 742.9L1048.8 760.3L1048.9 750.2L1049.0 749.5L1049.2 742.2L1049.3 745.6L1049.4 745.2L1049.6 751.5L1049.7 747.2L1049.8 749.1L1050.0 743.4L1050.1 750.5L1050.2 740.8L1050.4 762.4L1050.5 738.7L1050.6 750.0L1050.8 739.7L1050.9 747.4L1051.0 742.2L1051.2 736.2L1051.3 752.9L1051.4 764.2L1051.6 749.6L1051.7 747.2L1051.8 762.8L1052.0 750.2L1052.1 750.7L1052.2 754.6L1052.3 749.2L1052.5 761.5L1052.6 737.9L1052.7 745.9L1052.9 733.8L1053.0 755.3L1053.1 757.9L1053.3 745.1L1053.4 762.5L1053.5 745.8L1053.7 756.3L1053.8 753.5L1053.9 746.1L1054.1 747.8L1054.2 734.0L1054.3 742.9L1054.5 760.9L1054.6 771.1L1054.7 759.2L1054.9 747.9L1055.0 758.5L1055.1 755.0L1055.3 738.3L1055.4 753.6L1055.5 753.2L1055.7 752.5L1055.8 753.0L1055.9 737.6L1056.1 759.0L1056.2 778.9L1056.3 743.3L1056.5 762.3L1056.6 750.9L1056.7 739.4L1056.9 748.1L1057.0 751.8L1057.1 754.2L1057.3 755.6L1057.4 752.8L1057.5 746.8L1057.7 738.1L1057.8 740.9L1057.9 752.9L1058.0 754.3L1058.2 742.4L1058.3 763.9L1058.4 758.3L1058.6 750.4L1058.7 757.5L1058.8 757.4L1059.0 744.9L1059.1 764.2L1059.2 755.5L1059.4 753.9L1059.5 747.0L1059.6 760.7L1059.8 739.3L1059.9 750.6L1060.0 750.0L1060.2 750.8L1060.3 753.8L1060.4 757.1L1060.6 739.1L1060.7 746.3L1060.8 749.4L1061.0 753.6L1061.1 754.4L1061.2 743.8L1061.4 748.6L1061.5 775.8L1061.6 742.4L1061.8 761.3L1061.9 742.7L1062.0 755.9L1062.2 745.5L1062.3 738.0L1062.4 743.4L1062.6 754.3L1062.7 747.8L1062.8 752.4L1063.0 758.2L1063.1 757.4L1063.2 747.8L1063.3 744.5L1063.5 763.8L1063.6 750.6L1063.7 744.2L1063.9 746.8L1064.0 757.8L1064.1 740.4L1064.3 758.6L1064.4 744.1L1064.5 737.5L1064.7 766.3L1064.8 746.7L1064.9 746.4L1065.1 746.4L1065.2 755.5L1065.3 751.5L1065.5 760.7L1065.6 749.0L1065.7 743.8L1065.9 755.2L1066.0 757.9L1066.1 753.2L1066.3 748.4L1066.4 748.7L1066.5 749.6L1066.7 747.7L1066.8 762.5L1066.9 772.6L1067.1 743.7L1067.2 739.7L1067.3 761.5L1067.5 755.6L1067.6 745.5L1067.7 742.1L1067.9 743.4L1068.0 738.2L1068.1 755.1L1068.2 744.7L1068.4 745.7L1068.5 752.7L1068.6 740.3L1068.8 743.6L1068.9 742.3L1069.0 751.3L1069.2 740.2L1069.3 759.4L1069.4 745.4L1069.6 686.9L1069.7 757.3L1069.8 743.5L1070.0 752.1L1070.1 747.6L1070.2 763.3L1070.4 736.8L1070.5 745.0L1070.6 749.2L1070.8 745.3L1070.9 748.5L1071.0 737.6L1071.2 747.0L1071.3 762.5L1071.4 750.7L1071.6 738.5L1071.7 743.9L1071.8 751.8L1072.0 744.6L1072.1 747.8L1072.2 743.6L1072.4 782.6L1072.5 757.0L1072.6 743.3L1072.8 750.3L1072.9 745.2L1073.0 733.9L1073.2 750.7L1073.3 747.3L1073.4 752.8L1073.5 756.2L1073.7 760.5L1073.8 762.1L1073.9 767.3L1074.1 738.5L1074.2 749.2L1074.3 739.9L1074.5 751.6L1074.6 746.7L1074.7 742.8L1074.9 746.0L1075.0 759.4L1075.1 739.2L1075.3 757.3L1075.4 747.2L1075.5 729.6L1075.7 747.6L1075.8 737.8L1075.9 752.8L1076.1 743.2L1076.2 748.1L1076.3 744.6L1076.5 756.1L1076.6 757.5L1076.7 747.3L1076.9 763.1L1077.0 756.3L1077.1 744.4L1077.3 753.9L1077.4 755.7L1077.5 759.1L1077.7 746.9L1077.8 752.4L1077.9 747.7L1078.1 751.6L1078.2 735.3L1078.3 751.7L1078.5 767.0L1078.6 747.5L1078.7 768.3L1078.8 746.7L1079.0 781.4L1079.1 740.6L1079.2 748.2L1079.4 748.8L1079.5 762.0L1079.6 745.3L1079.8 749.7L1079.9 738.5L1080.0 752.5L1080.2 758.7L1080.3 746.8L1080.4 757.4L1080.6 745.8L1080.7 758.2L1080.8 749.1L1081.0 755.5L1081.1 748.1L1081.2 752.7L1081.4 756.9L1081.5 750.1L1081.6 755.1L1081.8 747.1L1081.9 751.2L1082.0 769.2L1082.2 748.5L1082.3 738.6L1082.4 745.9L1082.6 745.0L1082.7 745.3L1082.8 752.5L1083.0 760.7L1083.1 741.8L1083.2 741.1L1083.4 774.2L1083.5 746.0L1083.6 747.1L1083.8 751.2L1083.9 746.1L1084.0 747.9L1084.2 746.6L1084.3 757.3L1084.4 753.5L1084.5 758.0L1084.7 751.3L1084.8 769.2L1084.9 747.2L1085.1 768.5L1085.2 735.5L1085.3 743.4L1085.5 744.2L1085.6 754.0L1085.7 788.8L1085.9 750.6L1086.0 747.7L1086.1 755.0L1086.3 746.8L1086.4 743.5L1086.5 745.7L1086.7 757.7L1086.8 767.4L1086.9 747.7L1087.1 753.6L1087.2 744.6L1087.3 736.5L1087.5 746.6L1087.6 746.5L1087.7 739.8L1087.9 736.9L1088.0 747.8L1088.1 745.6L1088.3 741.7L1088.4 748.6L1088.5 752.6L1088.7 756.5L1088.8 747.8L1088.9 754.3L1089.1 742.3L1089.2 751.7L1089.3 738.1L1089.5 739.0L1089.6 758.5L1089.7 740.3L1089.8 752.0L1090.0 737.7L1090.1 744.8L1090.2 750.2L1090.4 742.7L1090.5 753.4L1090.6 745.4L1090.8 746.2L1090.9 750.6L1091.0 746.3L1091.2 765.0L1091.3 746.0L1091.4 758.9L1091.6 743.1L1091.7 745.6L1091.8 744.0L1092.0 752.8L1092.1 725.9L1092.2 750.1L1092.4 747.5L1092.5 755.8L1092.6 737.4L1092.8 754.3L1092.9 741.0L1093.0 758.4L1093.2 746.5L1093.3 751.0L1093.4 741.1L1093.6 750.5L1093.7 756.1L1093.8 744.7L1094.0 759.9L1094.1 756.1L1094.2 742.9L1094.4 764.5L1094.5 741.9L1094.6 752.4L1094.8 755.8L1094.9 746.8L1095.0 743.3L1095.1 752.4L1095.3 749.9L1095.4 745.0L1095.5 742.8L1095.7 747.9L1095.8 756.6L1095.9 758.1L1096.1 753.5L1096.2 743.7L1096.3 743.1L1096.5 746.2L1096.6 737.8L1096.7 749.9L1096.9 751.7L1097.0 750.8L1097.1 734.2L1097.3 766.6L1097.4 745.8L1097.5 744.2L1097.7 748.4L1097.8 730.7L1097.9 748.0L1098.1 742.1L1098.2 755.8L1098.3 747.8L1098.5 751.3L1098.6 748.4L1098.7 746.7L1098.9 757.1L1099.0 744.5L1099.1 736.8L1099.3 739.9L1099.4 746.2L1099.5 765.3L1099.7 739.4L1099.8 739.7L1099.9 750.8L1100.0 754.2L1100.2 742.8L1100.3 754.5L1100.4 744.6L1100.6 756.4L1100.7 754.9L1100.8 747.1L1101.0 760.1L1101.1 748.1L1101.2 744.1L1101.4 758.4L1101.5 743.2L1101.6 754.2L1101.8 743.8L1101.9 745.9L1102.0 751.2L1102.2 753.0L1102.3 762.2L1102.4 753.1L1102.6 754.2L1102.7 736.3L1102.8 739.9L1103.0 758.6L1103.1 742.2L1103.2 745.5L1103.4 750.3L1103.5 744.4L1103.6 742.3L1103.8 752.0L1103.9 750.4L1104.0 747.5L1104.2 755.6L1104.3 746.0L1104.4 747.7L1104.6 755.7L1104.7 755.5L1104.8 746.2L1105.0 740.8L1105.1 745.4L1105.2 776.7L1105.3 744.3L1105.5 745.8L1105.6 744.9L1105.7 739.6L1105.9 757.0L1106.0 749.7L1106.1 753.4L1106.3 756.0L1106.4 734.2L1106.5 743.3L1106.7 771.8L1106.8 744.3L1106.9 753.3L1107.1 740.1L1107.2 746.4L1107.3 749.2L1107.5 748.8L1107.6 745.4L1107.7 746.9L1107.9 759.3L1108.0 750.3L1108.1 744.5L1108.3 757.0L1108.4 747.6L1108.5 750.3L1108.7 754.3L1108.8 744.3L1108.9 759.9L1109.1 750.9L1109.2 756.9L1109.3 745.0L1109.5 750.9L1109.6 747.0L1109.7 746.4L1109.9 760.4L1110.0 744.1L1110.1 754.9L1110.3 749.6L1110.4 749.4L1110.5 741.3L1110.7 743.2L1110.8 735.6L1110.9 747.1L1111.0 752.7L1111.2 754.6L1111.3 742.6L1111.4 738.9L1111.6 745.6L1111.7 752.2L1111.8 745.4L1112.0 747.3L1112.1 747.4L1112.2 754.0L1112.4 771.2L1112.5 752.3L1112.6 740.0L1112.8 745.6L1112.9 769.0L1113.0 747.8L1113.2 764.3L1113.3 736.6L1113.4 745.9L1113.6 761.4L1113.7 742.6L1113.8 754.4L1114.0 743.8L1114.1 746.9L1114.2 757.8L1114.4 746.0L1114.5 760.2L1114.6 739.7L1114.8 746.9L1114.9 764.1L1115.0 763.1L1115.2 737.1L1115.3 737.3L1115.4 758.2L1115.6 736.0L1115.7 746.1L1115.8 751.3L1116.0 748.5L1116.1 750.2L1116.2 738.4L1116.3 746.3L1116.5 763.0L1116.6 732.7L1116.7 741.7L1116.9 761.2L1117.0 750.8L1117.1 758.9L1117.3 748.9L1117.4 748.4L1117.5 745.8L1117.7 754.2L1117.8 755.4L1117.9 742.8L1118.1 748.3L1118.2 755.5L1118.3 755.9L1118.5 741.8L1118.6 747.0L1118.7 756.8L1118.9 744.2L1119.0 748.4L1119.1 757.0L1119.3 752.1L1119.4 740.8L1119.5 761.2L1119.7 740.1L1119.8 745.6L1119.9 749.4L1120.1 740.1L1120.2 738.2L1120.3 743.2L1120.5 748.7L1120.6 737.2L1120.7 738.0L1120.9 755.4L1121.0 748.7L1121.1 749.2L1121.2 750.7L1121.4 761.0L1121.5 742.6L1121.6 748.9L1121.8 746.3L1121.9 738.8L1122.0 753.8L1122.2 752.3L1122.3 746.4L1122.4 751.9L1122.6 750.8L1122.7 742.1L1122.8 750.6L1123.0 739.7L1123.1 761.3L1123.2 746.2L1123.4 760.0L1123.5 749.3L1123.6 753.0L1123.8 737.8L1123.9 745.5L1124.0 744.8L1124.2 736.4L1124.3 740.4L1124.4 742.1L1124.6 754.0L1124.7 762.7L1124.8 747.6L1125.0 752.9L1125.1 752.7L1125.2 751.2L1125.4 765.0L1125.5 737.6L1125.6 758.0L1125.8 753.5L1125.9 745.9L1126.0 761.5L1126.2 741.1L1126.3 742.8L1126.4 750.4L1126.5 770.2L1126.7 760.5L1126.8 765.0L1126.9 737.0L1127.1 747.1L1127.2 754.1L1127.3 754.7L1127.5 743.5L1127.6 739.8L1127.7 758.1L1127.9 752.1L1128.0 762.0L1128.1 746.2L1128.3 746.2L1128.4 734.4L1128.5 748.9L1128.7 754.4L1128.8 755.4L1128.9 741.8L1129.1 762.3L1129.2 743.1L1129.3 761.5L1129.5 753.1L1129.6 756.1L1129.7 746.6L1129.9 736.1L1130.0 753.0L1130.1 744.7L1130.3 738.1L1130.4 756.2L1130.5 753.0L1130.7 759.2L1130.8 751.1L1130.9 748.1L1131.1 751.0L1131.2 753.3L1131.3 762.8L1131.5 776.4L1131.6 759.9L1131.7 745.4L1131.8 752.1L1132.0 757.1L1132.1 742.8L1132.2 746.0L1132.4 754.7L1132.5 754.9L1132.6 764.5L1132.8 745.1L1132.9 755.3L1133.0 747.2L1133.2 749.0L1133.3 741.1L1133.4 757.6L1133.6 743.6L1133.7 748.6L1133.8 758.5L1134.0 741.3L1134.1 743.6L1134.2 778.9L1134.4 746.8L1134.5 758.0L1134.6 758.6L1134.8 753.9L1134.9 743.9L1135.0 746.1L1135.2 749.1L1135.3 739.1L1135.4 745.2L1135.6 737.7L1135.7 727.6L1135.8 748.3L1136.0 769.2L1136.1 753.8L1136.2 759.2L1136.4 749.1L1136.5 749.2L1136.6 759.7L1136.8 757.4L1136.9 753.2L1137.0 754.5L1137.2 772.2L1137.3 745.0L1137.4 748.3L1137.5 747.4L1137.7 745.7L1137.8 757.1L1137.9 748.5L1138.1 745.3L1138.2 740.1L1138.3 743.7L1138.5 752.3L1138.6 757.1L1138.7 741.7L1138.9 745.5L1139.0 750.7L1139.1 766.5L1139.3 762.6L1139.4 769.3L1139.5 741.8L1139.7 746.7L1139.8 760.4L1139.9 756.3L1140.1 732.7L1140.2 739.3L1140.3 770.0L1140.5 751.1L1140.6 759.4L1140.7 762.9L1140.9 746.5L1141.0 730.2L1141.1 735.4L1141.3 749.7L1141.4 753.4L1141.5 747.5L1141.7 742.1L1141.8 762.0L1141.9 764.8L1142.1 736.1L1142.2 745.5L1142.3 738.0L1142.5 748.6L1142.6 740.9L1142.7 759.9L1142.8 745.6L1143.0 738.5L1143.1 741.8L1143.2 783.3L1143.4 744.2L1143.5 758.3L1143.6 761.9L1143.8 745.1L1143.9 739.6L1144.0 743.3L1144.2 761.5L1144.3 743.5L1144.4 750.6L1144.6 752.9L1144.7 772.3L1144.8 746.9L1145.0 741.9L1145.1 798.6L1145.2 763.8L1145.4 767.1L1145.5 752.3L1145.6 743.1L1145.8 747.4L1145.9 750.9L1146.0 748.1L1146.2 754.8L1146.3 749.7L1146.4 758.3L1146.6 751.1L1146.7 752.6L1146.8 745.4L1147.0 747.2L1147.1 756.3L1147.2 734.9L1147.4 766.6L1147.5 749.0L1147.6 769.0L1147.8 748.4L1147.9 775.4L1148.0 740.5L1148.1 738.4L1148.3 741.1L1148.4 773.8L1148.5 757.1L1148.7 749.0L1148.8 752.9L1148.9 737.6L1149.1 756.6L1149.2 742.6L1149.3 742.8L1149.5 760.9L1149.6 756.5L1149.7 762.2L1149.9 757.1L1150.0 745.5L1150.1 751.2L1150.3 741.0L1150.4 767.9L1150.5 793.7L1150.7 760.9L1150.8 747.7L1150.9 753.7L1151.1 757.2L1151.2 749.2L1151.3 733.5L1151.5 752.9L1151.6 757.5L1151.7 755.6L1151.9 741.7L1152.0 748.6L1152.1 744.8L1152.3 757.3L1152.4 745.4L1152.5 757.1L1152.7 746.3L1152.8 746.3L1152.9 754.7L1153.0 743.0L1153.2 752.7L1153.3 752.5L1153.4 758.2L1153.6 748.8L1153.7 762.4L1153.8 748.6L1154.0 757.6L1154.1 752.6L1154.2 754.6L1154.4 750.9L1154.5 750.8L1154.6 752.4L1154.8 750.4L1154.9 771.3L1155.0 743.0L1155.2 760.3L1155.3 751.6L1155.4 755.3L1155.6 744.2L1155.7 762.0L1155.8 752.0L1156.0 747.6L1156.1 743.9L1156.2 742.4L1156.4 745.5L1156.5 761.5L1156.6 740.3L1156.8 738.4L1156.9 747.1L1157.0 745.0L1157.2 746.5L1157.3 761.0L1157.4 781.4L1157.6 750.8L1157.7 763.3L1157.8 751.2L1158.0 753.4L1158.1 751.0L1158.2 750.4L1158.3 745.6L1158.5 741.2L1158.6 747.6L1158.7 779.2L1158.9 749.7L1159.0 747.7L1159.1 757.1L1159.3 742.0L1159.4 762.9L1159.5 745.7L1159.7 750.7L1159.8 754.7L1159.9 741.5L1160.1 750.1L1160.2 758.9L1160.3 759.7L1160.5 747.1L1160.6 752.9L1160.7 748.9L1160.9 749.7L1161.0 740.8L1161.1 752.6L1161.3 751.1L1161.4 741.5L1161.5 749.5L1161.7 753.2L1161.8 760.5L1161.9 743.4L1162.1 770.9L1162.2 752.7L1162.3 741.3L1162.5 763.6L1162.6 763.7L1162.7 744.7L1162.9 762.9L1163.0 749.3L1163.1 740.3L1163.3 758.7L1163.4 770.0L1163.5 747.0L1163.7 763.6L1163.8 737.4L1163.9 747.4L1164.0 758.3L1164.2 759.7L1164.3 747.4L1164.4 757.2L1164.6 757.2L1164.7 750.6L1164.8 754.8L1165.0 738.0L1165.1 765.1L1165.2 758.6L1165.4 755.8L1165.5 758.9L1165.6 746.0L1165.8 766.9L1165.9 741.3L1166.0 768.8L1166.2 748.0L1166.3 730.7L1166.4 773.3L1166.6 772.6L1166.7 749.2L1166.8 747.0L1167.0 751.9L1167.1 757.2L1167.2 759.2L1167.4 748.0L1167.5 743.0L1167.6 755.6L1167.8 751.7L1167.9 757.1L1168.0 734.4L1168.2 761.9L1168.3 752.2L1168.4 755.8L1168.6 776.2L1168.7 751.8L1168.8 766.7L1169.0 763.6L1169.1 791.3L1169.2 764.3L1169.3 747.0L1169.5 743.2L1169.6 773.8L1169.7 753.6L1169.9 777.8L1170.0 752.5L1170.1 750.1L1170.3 786.4L1170.4 745.9L1170.5 757.4L1170.7 754.6L1170.8 768.0L1170.9 758.1L1171.1 750.6L1171.2 745.9L1171.3 777.1L1171.5 780.0L1171.6 744.2L1171.7 744.6L1171.9 782.6L1172.0 760.5L1172.1 762.8L1172.3 757.5L1172.4 754.3L1172.5 762.4L1172.7 768.8L1172.8 770.7L1172.9 746.9L1173.1 751.1L1173.2 767.2L1173.3 769.6L1173.5 737.8L1173.6 748.5L1173.7 771.7L1173.9 735.1L1174.0 766.1L1174.1 775.5L1174.2 753.3L1174.4 754.5L1174.5 781.4L1174.6 788.5L1174.8 785.2L1174.9 766.0L1175.0 774.7L1175.2 754.9L1175.3 765.6L1175.4 783.6L1175.6 755.8L1175.7 755.0L1175.8 755.8L1176.0 772.0L1176.1 769.5L1176.2 771.0L1176.4 782.5L1176.5 755.5L1176.6 763.5L1176.8 753.6L1176.9 752.4L1177.0 784.0L1177.2 753.5L1177.3 755.0L1177.4 779.4L1177.6 760.5L1177.7 755.2L1177.8 754.7L1178.0 766.1L1178.1 756.7L1178.2 765.2L1178.4 746.4L1178.5 763.8L1178.6 748.8L1178.8 731.2L1178.9 744.0L1179.0 786.5L1179.2 750.2L1179.3 798.7L1179.4 736.5L1179.5 766.2L1179.7 776.3L1179.8 757.6L1179.9 747.0L1180.1 767.0L1180.2 811.0L1180.3 766.7L1180.5 767.6L1180.6 761.5L1180.7 768.1L1180.9 686.9L1181.0 766.6L1181.1 775.3L1181.3 750.2L1181.4 766.5L1181.5 802.6L1181.7 811.0L1181.8 783.2L1181.9 786.7L1182.1 800.4L1182.2 774.9L1182.3 791.4L1182.5 768.2L1182.6 811.0L1182.7 780.7L1182.9 749.3L1183.0 770.2L1183.1 811.0" fill="none" stroke="#00f" stroke-width="1.8" stroke-linejoin="bevel" clip-path="url(#c4)"/>
<rect x="1109" y="692.4" width="72.5" height="14.899999999999977" rx="2" fill="#fff" fill-opacity="0.8" stroke="#ccc" stroke-width="1"/>
<line x1="1111.3" y1="699.85" x2="1133.8" y2="699.85" stroke="#00f" stroke-width="1.5"/>
<text x="1136.2" y="703.6499999999999" font-size="10.4" text-anchor="start" textLength="41.6" lengthAdjust="spacingAndGlyphs">x=1024</text>
<rect x="911.05" y="688.9" width="273.85000000000014" height="120.10000000000002" fill="none" stroke="#000" stroke-width="1.7"/>
<text x="896.4" y="700.5" font-size="10.4" text-anchor="end">100</text>
<text x="896.4" y="725.6" font-size="10.4" text-anchor="end">50</text>
<text x="896.4" y="750.7" font-size="10.4" text-anchor="end">0</text>
<text x="896.4" y="775.8" font-size="10.4" text-anchor="end">−50</text>
<text x="896.4" y="800.9" font-size="10.4" text-anchor="end">−100</text>
<text x="911.9" y="831.9" font-size="10.4" text-anchor="middle">0</text>
<text x="978.15" y="831.9" font-size="10.4" text-anchor="middle">500</text>
<text x="1044.4" y="831.9" font-size="10.4" text-anchor="middle">1000</text>
<text x="1110.65" y="831.9" font-size="10.4" text-anchor="middle">1500</text>
<text x="1176.9" y="831.9" font-size="10.4" text-anchor="middle">2000</text>
<path d="M904.4499999999999,696.70H911.05M904.4499999999999,721.80H911.05M904.4499999999999,746.90H911.05M904.4499999999999,772.00H911.05M904.4499999999999,797.10H911.05M911.90,809.0V815.8M978.15,809.0V815.8M1044.40,809.0V815.8M1110.65,809.0V815.8M1176.90,809.0V815.8" stroke="#000" stroke-width="1.5" fill="none"/>
<text x="1049" y="849.7" font-size="10.4" text-anchor="middle">Y</text>
<text x="0" y="0" font-size="10.4" text-anchor="middle" transform="translate(857.2,750.6) rotate(-90)" textLength="34.7" lengthAdjust="spacingAndGlyphs">counts</text>
<text x="0" y="0" font-size="10.4" text-anchor="middle" transform="translate(1194.3,749.8) rotate(90)" textLength="40.5" lengthAdjust="spacingAndGlyphs">cut in y</text>
</svg></body></html>
